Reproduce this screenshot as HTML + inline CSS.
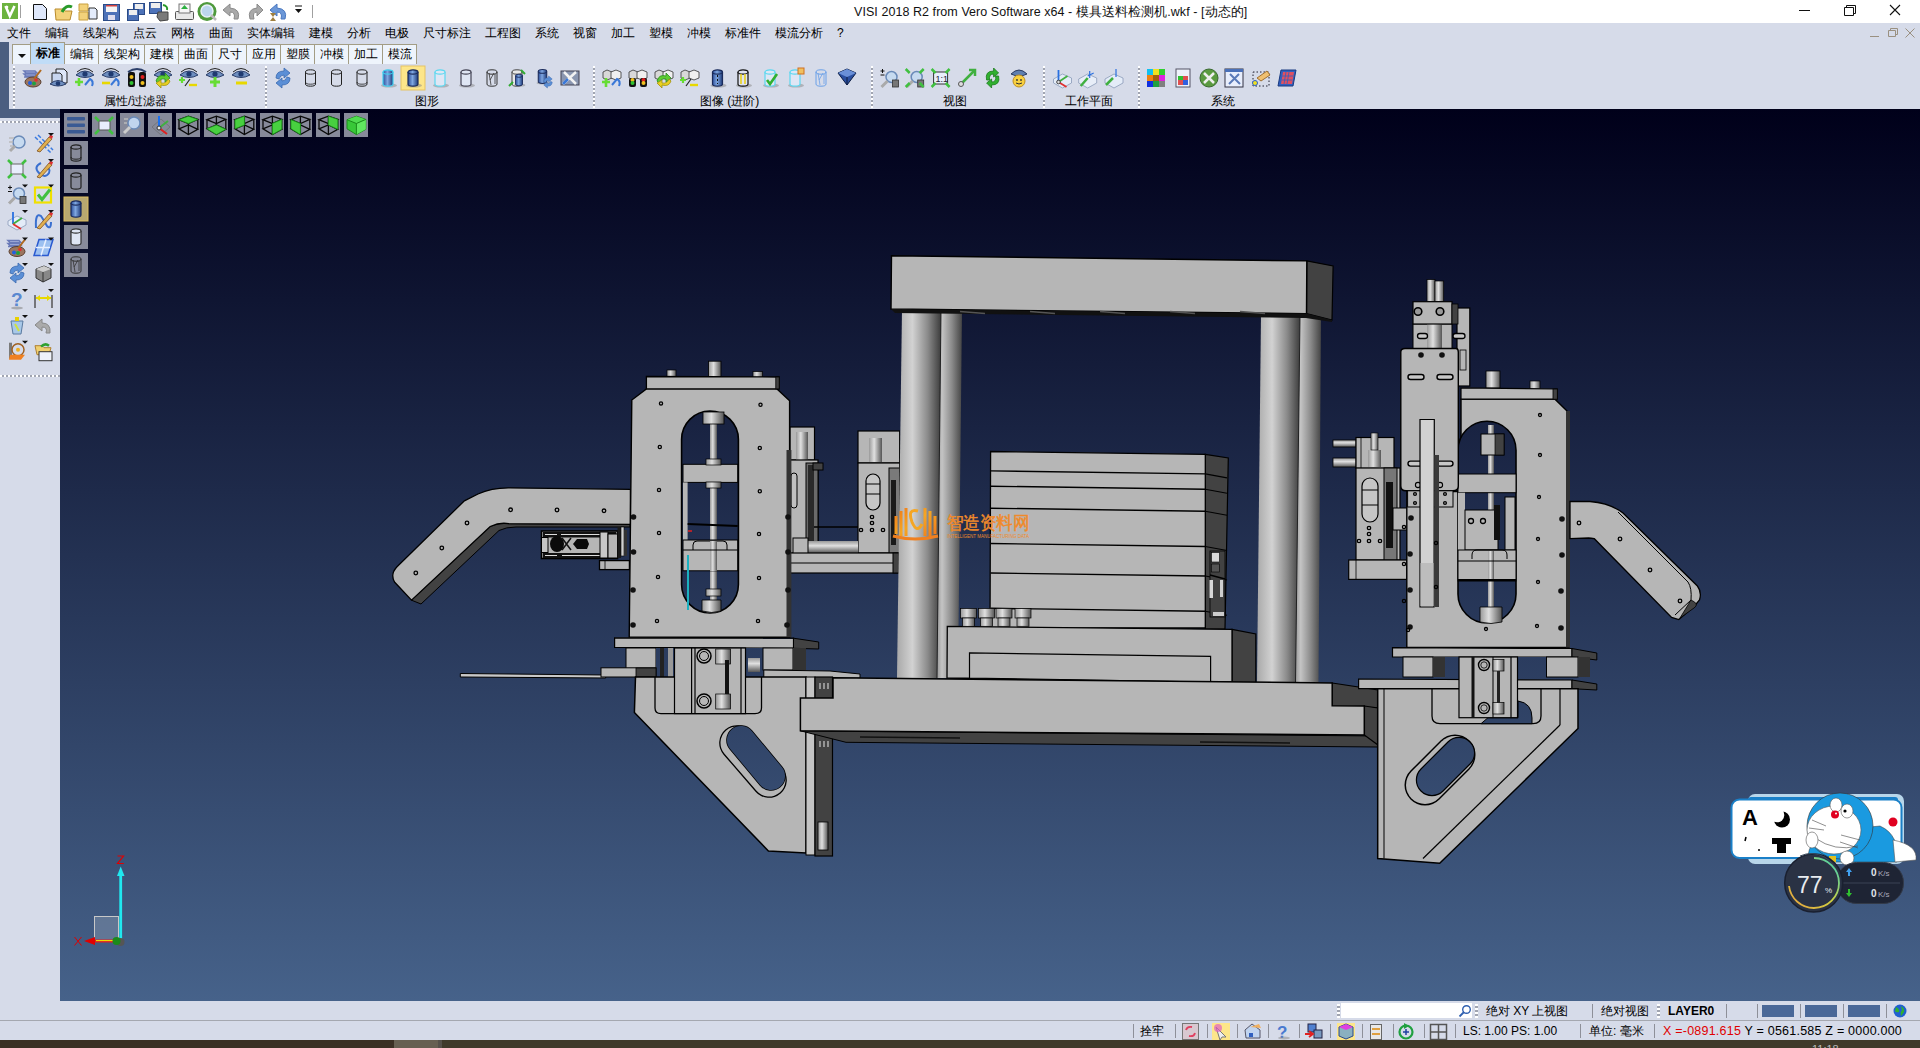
<!DOCTYPE html>
<html><head><meta charset="utf-8">
<style>
*{margin:0;padding:0;box-sizing:border-box}
html,body{width:1920px;height:1048px;overflow:hidden;background:#d6dbe9;font-family:"Liberation Sans",sans-serif;font-size:12px;color:#000}
.a{position:absolute}
.t{position:absolute;white-space:nowrap;line-height:1}
#title{left:0;top:0;width:1920px;height:23px;background:#fff}
#menu{left:0;top:23px;width:1920px;height:19px;background:#d6dbe9}
#tbwrap{left:9px;top:42px;width:1911px;height:67px;background:#d6dbe9}
#lstrip{left:0;top:42px;width:9px;height:76px;background:#4b5e80}
#lstrip2{left:0;top:109px;width:60px;height:9px;background:#4b5e80}
.tab{position:absolute;top:44px;height:20px;border:1px solid #a39d85;border-bottom:none;background:#eef4fc;font-size:12px;text-align:center;line-height:19px}
#view{left:60px;top:109px;width:1860px;height:892px;background:linear-gradient(#00001a,#46628a)}
#lpanel{left:0;top:118px;width:60px;height:883px;background:#d6dbe9}
#sb1{left:0;top:1001px;width:1920px;height:19px;background:#d6dbe9}
#sbline{left:0;top:1020px;width:1920px;height:1px;background:#a5a8b0}
#sb2{left:0;top:1021px;width:1920px;height:19px;background:#d6dbe9}
#task{left:0;top:1040px;width:1920px;height:8px;background:#3b2f24}
.lbl{position:absolute;top:95px;font-size:12px;white-space:nowrap;line-height:1}
.vsep{position:absolute;width:2px;background:repeating-linear-gradient(#fff 0 2px,#a0a4b0 2px 4px)}
.hsep{position:absolute;height:2px;background:repeating-linear-gradient(90deg,#fff 0 2px,#a0a4b0 2px 4px)}
.mi{position:absolute;top:27px;font-size:12px;white-space:nowrap;line-height:1}
.vb{position:absolute;width:24px;height:24px;background:#878a96;border:1px solid #6f7280}
.sbsep{position:absolute;top:1024px;width:1px;height:14px;background:#8e9099}

</style></head><body>
<div id="title" class="a"></div><div id="menu" class="a"></div><div id="tbwrap" class="a"></div>
<div id="lstrip" class="a"></div><div id="lstrip2" class="a"></div><div id="view" class="a"></div><div id="lpanel" class="a"></div>
<div id="sb1" class="a"></div><div id="sbline" class="a"></div><div id="sb2" class="a"></div><div id="task" class="a"></div>
<svg class="a" style="left:0;top:0" width="1920" height="42"><rect x="2" y="3" width="16" height="16" fill="#6cb33f"/><path d="M5.5 6 L9.8 16 L14.5 6" stroke="#fff" stroke-width="2.6" fill="none"/><circle cx="7" cy="7" r="1.3" fill="#fff"/><rect x="20" y="5" width="1" height="13" fill="#a0a0a0"/><path d="M33.5 4.5 H42.5 L46.5 8.5 V19.5 H33.5 Z" fill="#dfe8fb" stroke="#111" stroke-width="1"/><path d="M55 9 H63 L65 11 H72 L70 20 H56 Z" fill="#f3d27a" stroke="#b98a2a" stroke-width="1"/><path d="M62 12 Q66 4 72 7" stroke="#2a9a2a" stroke-width="3" fill="none"/><path d="M79 4 H88 V11 H79 Z M79 12 H88 V20 H79Z" fill="#f3d27a" stroke="#c9a040"/><path d="M89 8 H95 L97 10 V19 H89 Z" fill="#e4ecfb" stroke="#333"/><rect x="103.5" y="4.5" width="16" height="16" fill="#4d72b8" stroke="#2b4b86"/><rect x="106" y="5" width="11" height="7" fill="#f4f4f4"/><rect x="106" y="5" width="11" height="1.5" fill="#d04040"/><rect x="108" y="15" width="7" height="5" fill="#dde"/><rect x="133.5" y="3.5" width="11" height="11" fill="#4d72b8" stroke="#2b4b86"/><rect x="135" y="4" width="8" height="5" fill="#eee"/><rect x="127.5" y="9.5" width="11" height="11" fill="#4d72b8" stroke="#2b4b86"/><rect x="129" y="10" width="8" height="5" fill="#eee"/><rect x="149.5" y="2.5" width="12" height="11" fill="#4d72b8" stroke="#2b4b86"/><rect x="151" y="3" width="9" height="5" fill="#eee"/><path d="M158 12 L168 12 L168 20 L160 21 L157 17Z" fill="#7a7a7a" stroke="#444"/><path d="M163 5 Q168 6 167 10" stroke="#2a9a2a" stroke-width="2" fill="none"/><rect x="175.5" y="11.5" width="18" height="8" rx="1" fill="#e8e8e8" stroke="#555"/><rect x="179" y="4" width="11" height="9" fill="#f6f6f6" stroke="#777"/><path d="M184.5 5 L181 9 H188Z" fill="#2bb040"/><circle cx="207" cy="11.5" r="9.5" fill="#4f9a3d"/><circle cx="207" cy="11" r="6" fill="#bcd6ee" stroke="#e8f0f8" stroke-width="1.5"/><path d="M211 15 L216 20" stroke="#bbb" stroke-width="2.5"/><path d="M238 19 Q241 9 230 8 L230 4 L223 10 L230 16 L230 12 Q236 12 234 19Z" fill="#a9a9a9" stroke="#8a8a8a"/><path d="M250 19 Q247 9 257 8 L257 4 L263 10 L257 16 L257 12 Q252 12 254 19Z" fill="#a9a9a9" stroke="#8a8a8a"/><path d="M285 19 Q288 9 277 8 L277 4 L270 10 L277 16 L277 12 Q283 12 281 19Z" fill="#6c98d8" stroke="#4a78c0"/><path d="M270 13 H276 L273 17 L276 21 H270 L273 17Z" fill="#a08040"/><path d="M295 6 H302" stroke="#111" stroke-width="1"/><path d="M295 9 L302 9 L298.5 13Z" fill="#111"/><rect x="312" y="5" width="1" height="13" fill="#a0a0a0"/><path d="M1799 10.5 H1810" stroke="#111" stroke-width="1"/><path d="M1844.5 7.5 H1853.5 V15.5 H1844.5Z" fill="none" stroke="#111"/><path d="M1846.5 7.5 V5.5 H1855.5 V13.5 H1853.5" fill="none" stroke="#111"/><path d="M1890 5 L1900 15 M1900 5 L1890 15" stroke="#111" stroke-width="1.1"/><path d="M1870 36.5 H1879" stroke="#9a9080" stroke-width="1"/><path d="M1888.5 30.5 H1895.5 V36.5 H1888.5Z M1890.5 30.5 V28.5 H1897.5 V34.5 H1895.5" fill="none" stroke="#9a9080"/><path d="M1905.5 28.5 L1914.5 37.5 M1914.5 28.5 L1905.5 37.5" stroke="#9a9080" stroke-width="1"/></svg>
<div class="t" style="left:854px;top:6px;font-size:12.5px;letter-spacing:0.06px;color:#111" id="ttl">VISI 2018 R2 from Vero Software x64 - 模具送料检测机.wkf - [动态的]</div>
<div class="mi" style="left:7px">文件</div>
<div class="mi" style="left:45px">编辑</div>
<div class="mi" style="left:83px">线架构</div>
<div class="mi" style="left:133px">点云</div>
<div class="mi" style="left:171px">网格</div>
<div class="mi" style="left:209px">曲面</div>
<div class="mi" style="left:247px">实体编辑</div>
<div class="mi" style="left:309px">建模</div>
<div class="mi" style="left:347px">分析</div>
<div class="mi" style="left:385px">电极</div>
<div class="mi" style="left:423px">尺寸标注</div>
<div class="mi" style="left:485px">工程图</div>
<div class="mi" style="left:535px">系统</div>
<div class="mi" style="left:573px">视窗</div>
<div class="mi" style="left:611px">加工</div>
<div class="mi" style="left:649px">塑模</div>
<div class="mi" style="left:687px">冲模</div>
<div class="mi" style="left:725px">标准件</div>
<div class="mi" style="left:775px">模流分析</div>
<div class="mi" style="left:837px">?</div>
<div class="tab" style="left:12px;width:19px"><svg width="14" height="19" style="margin-top:0"><path d="M3 9 L11 9 L7 13Z" fill="#111"/></svg></div>
<div class="tab" style="left:30px;width:35px;top:42px;height:22px;background:#c0dcf7;font-weight:bold;line-height:21px;">标准</div>
<div class="tab" style="left:64px;width:35px;">编辑</div>
<div class="tab" style="left:98px;width:47px;">线架构</div>
<div class="tab" style="left:144px;width:35px;">建模</div>
<div class="tab" style="left:178px;width:35px;">曲面</div>
<div class="tab" style="left:212px;width:35px;">尺寸</div>
<div class="tab" style="left:246px;width:35px;">应用</div>
<div class="tab" style="left:280px;width:35px;">塑膜</div>
<div class="tab" style="left:314px;width:35px;">冲模</div>
<div class="tab" style="left:348px;width:35px;">加工</div>
<div class="tab" style="left:382px;width:35px;">模流</div><svg class="a" style="left:0;top:0" width="1920" height="1048" viewBox="0 0 1920 1048">
<defs>
<linearGradient id="bg" gradientUnits="userSpaceOnUse" x1="0" y1="109" x2="0" y2="1001"><stop offset="0" stop-color="#00001a"/><stop offset="1" stop-color="#46628a"/></linearGradient>
<linearGradient id="pa" x1="0" y1="0" x2="1" y2="0"><stop offset="0" stop-color="#a9a9a9"/><stop offset="0.35" stop-color="#d2d2d2"/><stop offset="0.7" stop-color="#8a8a8a"/><stop offset="1" stop-color="#3c3c3c"/></linearGradient>
<linearGradient id="pb" x1="0" y1="0" x2="1" y2="0"><stop offset="0" stop-color="#9a9a9a"/><stop offset="0.2" stop-color="#c4c4c4"/><stop offset="0.6" stop-color="#8a8a8a"/><stop offset="1" stop-color="#444"/></linearGradient>
<linearGradient id="rod" x1="0" y1="0" x2="1" y2="0"><stop offset="0" stop-color="#999"/><stop offset="0.4" stop-color="#e0e0e0"/><stop offset="1" stop-color="#555"/></linearGradient>
<linearGradient id="rodh" x1="0" y1="0" x2="0" y2="1"><stop offset="0" stop-color="#999"/><stop offset="0.4" stop-color="#e0e0e0"/><stop offset="1" stop-color="#555"/></linearGradient>
<linearGradient id="wl" x1="0" y1="0" x2="1" y2="1"><stop offset="0" stop-color="#f07a1a"/><stop offset="0.5" stop-color="#f5a623"/><stop offset="1" stop-color="#f07a1a"/></linearGradient>
</defs>
<path d="M411.5 600.2 L421 604 L499 530.5 Q506 527 516 527 L630 527 L630 524.4 L508.8 523.7 Q500 522 490.2 526.5 Z" fill="#424242" stroke="#000" stroke-width="1" />
<path d="M630.4 489.3 L510.2 487.9 Q492 487.5 478 494 L464.4 500.8 L397 566.7 Q390 574 394.5 582 L411.5 600.2 L490.2 526.5 Q500 522 508.8 523.7 L630.4 524.4 Z" fill="#b6b6b6" stroke="#000" stroke-width="1.3" />
<circle cx="415.8" cy="573" r="1.8" fill="none" stroke="#000" stroke-width="1.3"/>
<circle cx="441.8" cy="548" r="1.8" fill="none" stroke="#000" stroke-width="1.3"/>
<circle cx="467" cy="523" r="1.8" fill="none" stroke="#000" stroke-width="1.3"/>
<circle cx="510.6" cy="509.8" r="1.8" fill="none" stroke="#000" stroke-width="1.3"/>
<circle cx="557" cy="510" r="1.8" fill="none" stroke="#000" stroke-width="1.3"/>
<circle cx="604" cy="510.8" r="1.8" fill="none" stroke="#000" stroke-width="1.3"/>
<rect x="541.5" y="531" width="76" height="27.5" fill="#b6b6b6" stroke="#000" stroke-width="1.6" />
<rect x="543" y="532" width="73" height="5.5" fill="#111" stroke="none" stroke-width="0" />
<rect x="543" y="553" width="73" height="5" fill="#111" stroke="none" stroke-width="0" />
<line x1="545" y1="534.5" x2="557" y2="534.5" stroke="#ddd" stroke-width="1"/>
<line x1="561" y1="534.5" x2="600" y2="534.5" stroke="#ddd" stroke-width="1"/>
<line x1="545" y1="555.5" x2="557" y2="555.5" stroke="#ddd" stroke-width="1"/>
<line x1="562" y1="555.5" x2="600" y2="555.5" stroke="#ddd" stroke-width="1"/>
<rect x="541.5" y="537.5" width="6.5" height="15" fill="#c4c4c4" stroke="#000" stroke-width="1" />
<ellipse cx="557" cy="544" rx="7" ry="8" fill="#0a0a0a"/>
<path d="M573 544 L577 539 L587 539 L589 544 L587 549 L577 549 Z" fill="#0a0a0a" stroke="none" stroke-width="0" />
<path d="M562 538 L571 550 M571 538 L562 550" fill="none" stroke="#111" stroke-width="1.5" />
<rect x="600" y="532" width="8" height="26" fill="#c8c8c8" stroke="#000" stroke-width="1" />
<rect x="608" y="534" width="9.5" height="24" fill="#b6b6b6" stroke="#000" stroke-width="1" />
<rect x="617.5" y="527" width="3.5" height="31" fill="#1a1a1a" stroke="none" stroke-width="0" />
<rect x="621" y="527" width="3" height="29" fill="#d0d0d0" stroke="#000" stroke-width="0.6" />
<rect x="624" y="530" width="3" height="26" fill="#333" stroke="none" stroke-width="0" />
<rect x="599.5" y="560.6" width="29.9" height="9" fill="#b6b6b6" stroke="#000" stroke-width="1.3" />
<line x1="605" y1="560.6" x2="605" y2="569.6" stroke="#000" stroke-width="0.8"/>
<rect x="858" y="431" width="41.7" height="32" fill="#b6b6b6" stroke="#000" stroke-width="1.2" />
<rect x="869" y="438" width="13" height="24" fill="url(#rod)" stroke="none" stroke-width="0" />
<rect x="790" y="427" width="24.5" height="33" fill="#b6b6b6" stroke="#000" stroke-width="1.2" />
<rect x="796" y="432" width="12" height="28" fill="url(#rod)" stroke="none" stroke-width="0" />
<rect x="790" y="460" width="28" height="93" fill="#b6b6b6" stroke="#000" stroke-width="1.2" />
<rect x="806" y="463" width="12" height="90" fill="#6a6a6a" stroke="#000" stroke-width="1" />
<rect x="808" y="465" width="6" height="83" fill="#2a2a2a" stroke="none" stroke-width="0" />
<path d="M791 476 A3 3 0 0 1 797 476 L797 505 A3 3 0 0 1 791 505 Z" fill="#c0c0c0" stroke="#000" stroke-width="1" />
<rect x="813" y="463" width="10" height="7" fill="#424242" stroke="#000" stroke-width="1" />
<rect x="858" y="463" width="41.7" height="90" fill="#b6b6b6" stroke="#000" stroke-width="1.2" />
<path d="M866 481 A7 7 0 0 1 880 481 L880 503 A7 7 0 0 1 866 503 Z" fill="#c6c6c6" stroke="#000" stroke-width="1.2" />
<line x1="866" y1="484" x2="880" y2="484" stroke="#000" stroke-width="1"/>
<line x1="866" y1="494" x2="880" y2="494" stroke="#000" stroke-width="1"/>
<rect x="889" y="468" width="10.7" height="85" fill="#7a7a7a" stroke="#000" stroke-width="1" />
<rect x="891" y="480" width="5" height="65" fill="#1a1a1a" stroke="none" stroke-width="0" />
<circle cx="872" cy="517" r="1.7" fill="none" stroke="#000" stroke-width="1.3"/>
<circle cx="872" cy="523" r="1.7" fill="none" stroke="#000" stroke-width="1.3"/>
<circle cx="861" cy="530" r="1.7" fill="none" stroke="#000" stroke-width="1.3"/>
<circle cx="872" cy="530" r="1.7" fill="none" stroke="#000" stroke-width="1.3"/>
<circle cx="883" cy="530" r="1.7" fill="none" stroke="#000" stroke-width="1.3"/>
<line x1="814" y1="527" x2="858" y2="527" stroke="#000" stroke-width="1.5"/>
<rect x="808" y="541" width="50" height="12" fill="url(#rodh)" stroke="none" stroke-width="0" />
<rect x="793" y="538" width="15" height="19" fill="#b6b6b6" stroke="#000" stroke-width="1" />
<rect x="790" y="553" width="108.8" height="20" fill="#b6b6b6" stroke="#000" stroke-width="1.2" />
<line x1="790" y1="563" x2="898.8" y2="563" stroke="#000" stroke-width="1"/>
<rect x="893" y="553" width="6" height="20" fill="#424242" stroke="#000" stroke-width="1" />
<polygon points="902,309 941,309 937,678 897,678" fill="url(#pa)" stroke="none" stroke-width="0" />
<polygon points="941,312 962,312 958,678 937,678" fill="url(#pb)" stroke="none" stroke-width="0" />
<line x1="941" y1="309" x2="937" y2="678" stroke="#222" stroke-width="1"/>
<polygon points="1205.3,454.3 1228.3,458 1225,629 1205.3,629" fill="#424242" stroke="#000" stroke-width="1.2" />
<polygon points="990.6,451.5 1205.3,454.3 1205.3,628 990,628" fill="#b6b6b6" stroke="#000" stroke-width="1.3" />
<line x1="990.6" y1="470.9" x2="1205.3" y2="473.9" stroke="#000" stroke-width="1.4"/>
<line x1="1205.3" y1="473.9" x2="1227" y2="477.9" stroke="#000" stroke-width="1.1"/>
<line x1="990.6" y1="486.2" x2="1205.3" y2="489.2" stroke="#000" stroke-width="1.4"/>
<line x1="1205.3" y1="489.2" x2="1227" y2="493.2" stroke="#000" stroke-width="1.1"/>
<line x1="990.6" y1="508.2" x2="1205.3" y2="511.2" stroke="#000" stroke-width="1.4"/>
<line x1="1205.3" y1="511.2" x2="1227" y2="515.2" stroke="#000" stroke-width="1.1"/>
<line x1="990.6" y1="543.5" x2="1205.3" y2="546.5" stroke="#000" stroke-width="1.4"/>
<line x1="1205.3" y1="546.5" x2="1227" y2="550.5" stroke="#000" stroke-width="1.1"/>
<line x1="990.6" y1="573" x2="1205.3" y2="576" stroke="#000" stroke-width="1.4"/>
<line x1="1205.3" y1="576" x2="1227" y2="580" stroke="#000" stroke-width="1.1"/>
<line x1="990.6" y1="608.3" x2="1205.3" y2="611.3" stroke="#000" stroke-width="1.4"/>
<line x1="1205.3" y1="611.3" x2="1227" y2="615.3" stroke="#000" stroke-width="1.1"/>
<rect x="1210" y="551" width="15" height="66" fill="#424242" stroke="#000" stroke-width="0.8" />
<rect x="1211.5" y="552.5" width="8" height="9.5" fill="#d8d8d8" stroke="#000" stroke-width="0.6" />
<rect x="1211.5" y="564" width="8" height="8" fill="#555" stroke="#000" stroke-width="0.6" />
<rect x="1209.5" y="580" width="3.5" height="18" fill="#d8d8d8" stroke="none" stroke-width="0" />
<rect x="1220" y="580" width="3" height="17" fill="#cfcfcf" stroke="none" stroke-width="0" />
<line x1="1210" y1="575" x2="1225" y2="579" stroke="#000" stroke-width="1.5"/>
<rect x="1213" y="612" width="11" height="4" fill="#ccc" stroke="none" stroke-width="0" />
<polygon points="1232,629.4 1255.8,634 1255.8,683 1232,682" fill="#424242" stroke="#000" stroke-width="1.2" />
<polygon points="947.3,626.3 1232,629.4 1232,682 947,678" fill="#b6b6b6" stroke="#000" stroke-width="1.3" />
<polygon points="969.5,652.9 1210.6,656.3 1210.6,682 969.5,678" fill="#b6b6b6" stroke="#000" stroke-width="1.2" />
<rect x="960.5" y="608.5" width="16" height="9.5" fill="url(#rod)" stroke="#000" stroke-width="0.7" />
<rect x="962.5" y="618" width="12" height="8.3" fill="url(#rod)" stroke="#000" stroke-width="0.7" />
<rect x="978.5" y="608.5" width="16" height="9.5" fill="url(#rod)" stroke="#000" stroke-width="0.7" />
<rect x="980.5" y="618" width="12" height="8.3" fill="url(#rod)" stroke="#000" stroke-width="0.7" />
<rect x="996" y="608.5" width="16" height="9.5" fill="url(#rod)" stroke="#000" stroke-width="0.7" />
<rect x="998" y="618" width="12" height="8.3" fill="url(#rod)" stroke="#000" stroke-width="0.7" />
<rect x="1015" y="608.5" width="16" height="9.5" fill="url(#rod)" stroke="#000" stroke-width="0.7" />
<rect x="1017" y="618" width="12" height="8.3" fill="url(#rod)" stroke="#000" stroke-width="0.7" />
<polygon points="1261,314 1300,314 1295.5,683 1257,683" fill="url(#pa)" stroke="none" stroke-width="0" />
<polygon points="1300,318 1321,318 1318.5,683 1295.5,683" fill="url(#pb)" stroke="none" stroke-width="0" />
<line x1="1300" y1="316" x2="1295.5" y2="683" stroke="#222" stroke-width="1"/>
<polygon points="1306.8,260.9 1333.1,266 1332,320 1306.5,313.6" fill="#424242" stroke="#000" stroke-width="1.2" />
<polygon points="891.5,255.7 1306.8,260.9 1306.5,313.6 891,309" fill="#b6b6b6" stroke="#000" stroke-width="1.4" />
<path d="M891 309 L1306.5 313.6 L1332 320 L1332 322 L1306 318 L895 313 Z" fill="#111" stroke="none" stroke-width="0" />
<line x1="960" y1="311.5" x2="985" y2="313.5" stroke="#555" stroke-width="1.5"/>
<line x1="1030" y1="311.5" x2="1055" y2="313.5" stroke="#555" stroke-width="1.5"/>
<line x1="1100" y1="311.5" x2="1125" y2="313.5" stroke="#555" stroke-width="1.5"/>
<line x1="1170" y1="311.5" x2="1195" y2="313.5" stroke="#555" stroke-width="1.5"/>
<line x1="1240" y1="311.5" x2="1265" y2="313.5" stroke="#555" stroke-width="1.5"/>
<g>
<path d="M896 534 L896 516 M901 536 L901 511 M906 536 L906 508 M925 536 L925 508 M930 536 L930 511 M935 534 L935 516" fill="none" stroke="url(#wl)" stroke-width="3" />
<path d="M893 536 Q915 542 938 536" fill="none" stroke="#f08020" stroke-width="3" />
<path d="M912 522 Q907 508 918 511 M912 522 Q917 534 922 524" fill="none" stroke="#f5a623" stroke-width="3" />
</g>
<text x="946.5" y="529" font-size="17.5" fill="#f08a2a" stroke="#f08a2a" stroke-width="0.45" font-family="Liberation Sans,sans-serif" textLength="83" lengthAdjust="spacingAndGlyphs">智造资料网</text>
<text x="947" y="537.5" font-size="4.5" fill="#f08a2a" font-family="Liberation Sans,sans-serif" textLength="82" lengthAdjust="spacingAndGlyphs">INTELLIGENT MANUFACTURING DATA</text>
<rect x="708.6" y="361.2" width="12.4" height="15.8" fill="url(#rod)" stroke="#000" stroke-width="0.8" />
<rect x="667" y="370" width="9" height="7" fill="url(#rod)" stroke="#000" stroke-width="0.7" />
<rect x="753" y="371.6" width="9.6" height="6.2" fill="url(#rod)" stroke="#000" stroke-width="0.7" />
<polygon points="646.4,388.9 777,388.9 789.6,400.7 789.6,637.3 629.2,637.3 631.8,400" fill="#b6b6b6" stroke="#000" stroke-width="1.4" />
<rect x="786.5" y="450" width="4.9" height="187.3" fill="#333" stroke="none" stroke-width="0" />
<polygon points="646.4,376.5 779.2,377 779.2,388.9 646.4,388.9" fill="#b6b6b6" stroke="#000" stroke-width="1.3" />
<rect x="775.8" y="377" width="3.4" height="11.9" fill="#424242" stroke="#000" stroke-width="0.8" />
<path d="M681.6 439.4 A28.4 28.4 0 0 1 738.4 439.4 L738.4 584.6 A28.4 28.4 0 0 1 681.6 584.6 Z" fill="url(#bg)" stroke="#000" stroke-width="1.6" />
<rect x="710" y="418" width="7" height="182" fill="url(#rod)" stroke="none" stroke-width="0" />
<rect x="683" y="464.3" width="54.7" height="18.1" fill="#b6b6b6" stroke="#000" stroke-width="1" />
<rect x="683" y="482.4" width="4.6" height="57.6" fill="#b6b6b6" stroke="none" stroke-width="0" />
<rect x="683" y="540" width="54.7" height="30.8" fill="#b6b6b6" stroke="#000" stroke-width="1" />
<path d="M693 550 L693 545 Q693 541 697 541 L723 541 Q727 541 727 545 L727 550" fill="none" stroke="#000" stroke-width="1" />
<rect x="710" y="541" width="7" height="30" fill="url(#rod)" stroke="none" stroke-width="0" />
<line x1="683" y1="550" x2="737.7" y2="550" stroke="#000" stroke-width="1"/>
<line x1="687.6" y1="524" x2="737.7" y2="526" stroke="#000" stroke-width="2"/>
<rect x="703" y="412" width="21" height="12" fill="url(#rod)" stroke="#000" stroke-width="0.8" />
<rect x="706" y="459" width="15" height="6" fill="url(#rod)" stroke="#000" stroke-width="0.7" />
<rect x="706" y="482" width="15" height="6" fill="url(#rod)" stroke="#000" stroke-width="0.7" />
<rect x="706" y="589" width="15" height="7" fill="url(#rod)" stroke="#000" stroke-width="0.7" />
<path d="M702 600 L721 600 L721 611 Q712 614 702 611 Z" fill="url(#rod)" stroke="#000" stroke-width="0.8" />
<line x1="688" y1="555" x2="688" y2="610" stroke="#1ab0c0" stroke-width="2"/>
<line x1="688" y1="531" x2="692" y2="531" stroke="#e02020" stroke-width="1.5"/>
<circle cx="661" cy="403.4" r="1.6" fill="none" stroke="#000" stroke-width="1.3"/>
<circle cx="760.5" cy="404.8" r="1.6" fill="none" stroke="#000" stroke-width="1.3"/>
<circle cx="659.8" cy="447" r="1.6" fill="none" stroke="#000" stroke-width="1.3"/>
<circle cx="759.8" cy="448" r="1.6" fill="none" stroke="#000" stroke-width="1.3"/>
<circle cx="659" cy="490" r="1.6" fill="none" stroke="#000" stroke-width="1.3"/>
<circle cx="759.8" cy="491.3" r="1.6" fill="none" stroke="#000" stroke-width="1.3"/>
<circle cx="659" cy="533" r="1.6" fill="none" stroke="#000" stroke-width="1.3"/>
<circle cx="759" cy="534" r="1.6" fill="none" stroke="#000" stroke-width="1.3"/>
<circle cx="658" cy="577" r="1.6" fill="none" stroke="#000" stroke-width="1.3"/>
<circle cx="759" cy="578" r="1.6" fill="none" stroke="#000" stroke-width="1.3"/>
<circle cx="657" cy="621" r="1.6" fill="none" stroke="#000" stroke-width="1.3"/>
<circle cx="758" cy="621" r="1.6" fill="none" stroke="#000" stroke-width="1.3"/>
<circle cx="633.5" cy="517" r="2.8" fill="#111"/>
<circle cx="633.5" cy="552" r="2.8" fill="#111"/>
<circle cx="633" cy="590" r="2.8" fill="#111"/>
<circle cx="633" cy="625" r="2.8" fill="#111"/>
<circle cx="788" cy="517" r="2.8" fill="#111"/>
<circle cx="788" cy="552" r="2.8" fill="#111"/>
<circle cx="788" cy="590" r="2.8" fill="#111"/>
<circle cx="787" cy="625" r="2.8" fill="#111"/>
<polygon points="614.6,637.8 793.5,638.2 793.5,648.3 614.6,647.3" fill="#b6b6b6" stroke="#000" stroke-width="1.2" />
<polygon points="793.5,638.2 818.7,642 818.7,649 793.5,648.3" fill="#424242" stroke="#000" stroke-width="1" />
<rect x="626" y="648" width="30" height="22" fill="#b6b6b6" stroke="#000" stroke-width="1" />
<rect x="656" y="648" width="18.5" height="29" fill="url(#bg)" stroke="none" stroke-width="0" />
<rect x="660" y="648" width="4" height="29" fill="#222" stroke="none" stroke-width="0" />
<rect x="668" y="648" width="5" height="29" fill="#999" stroke="none" stroke-width="0" />
<rect x="745.5" y="648" width="17.5" height="29" fill="url(#bg)" stroke="none" stroke-width="0" />
<rect x="748" y="658" width="12" height="14" fill="url(#rodh)" stroke="none" stroke-width="0" />
<rect x="763" y="648" width="30" height="22" fill="#b6b6b6" stroke="#000" stroke-width="1" />
<rect x="793" y="648" width="13" height="29" fill="#333" stroke="none" stroke-width="0" />
<polygon points="460.3,673.5 605.7,675 605.7,678 460.3,677" fill="#c8c8c8" stroke="#000" stroke-width="1" />
<rect x="601" y="667.8" width="55" height="9.2" fill="#b6b6b6" stroke="#000" stroke-width="1" />
<rect x="636" y="668" width="20" height="9" fill="#424242" stroke="#000" stroke-width="0.8" />
<polygon points="763.8,670 830,671 860,674 860,678 763.8,678" fill="#b6b6b6" stroke="#000" stroke-width="1" />
<polygon points="635.5,677 806,677 806,853 768.4,851 634.4,712.5" fill="#b6b6b6" stroke="#000" stroke-width="1.5" />
<rect x="806" y="677" width="9" height="178" fill="#c4c4c4" stroke="#000" stroke-width="1" />
<rect x="815" y="677" width="17.5" height="179" fill="#424242" stroke="#000" stroke-width="1.2" />
<path d="M655 677 L655 708 Q655 713.6 661 713.6 L755 713.6 Q761.5 713.6 761.5 708 L761.5 677" fill="none" stroke="#000" stroke-width="1.3" />
<line x1="737" y1="743" x2="769" y2="780" stroke="#000" stroke-width="35.6" stroke-linecap="round"/>
<line x1="737" y1="743" x2="769" y2="780" stroke="#b6b6b6" stroke-width="33" stroke-linecap="round"/>
<line x1="741" y1="740" x2="771" y2="776" stroke="#000" stroke-width="29.6" stroke-linecap="round"/>
<line x1="741" y1="740" x2="771" y2="776" stroke="url(#bg)" stroke-width="28" stroke-linecap="round"/>
<rect x="674.5" y="648" width="71" height="65.6" fill="#b6b6b6" stroke="#000" stroke-width="1.2" />
<line x1="691.6" y1="648" x2="691.6" y2="713.6" stroke="#000" stroke-width="1.2"/>
<line x1="695" y1="648" x2="695" y2="713.6" stroke="#000" stroke-width="1.2"/>
<line x1="741" y1="648" x2="741" y2="713.6" stroke="#000" stroke-width="1.2"/>
<circle cx="704" cy="656" r="7" fill="none" stroke="#000" stroke-width="1.5"/><circle cx="704" cy="656" r="4.5" fill="none" stroke="#000" stroke-width="1"/>
<rect x="715.7" y="649" width="14.9" height="15" fill="url(#rod)" stroke="#000" stroke-width="0.7" />
<circle cx="704" cy="701" r="7" fill="none" stroke="#000" stroke-width="1.5"/><circle cx="704" cy="701" r="4.5" fill="none" stroke="#000" stroke-width="1"/>
<rect x="715.7" y="694" width="14.9" height="15" fill="url(#rod)" stroke="#000" stroke-width="0.7" />
<rect x="725" y="660" width="4" height="34" fill="#111" stroke="none" stroke-width="0" />
<rect x="818" y="822" width="10" height="28" fill="url(#rod)" stroke="#000" stroke-width="0.8" />
<line x1="820" y1="683" x2="820" y2="689" stroke="#ccc" stroke-width="1.2"/>
<line x1="824" y1="683" x2="824" y2="689" stroke="#ccc" stroke-width="1.2"/>
<line x1="828" y1="683" x2="828" y2="689" stroke="#ccc" stroke-width="1.2"/>
<line x1="820" y1="741" x2="820" y2="747" stroke="#ccc" stroke-width="1.2"/>
<line x1="824" y1="741" x2="824" y2="747" stroke="#ccc" stroke-width="1.2"/>
<line x1="828" y1="741" x2="828" y2="747" stroke="#ccc" stroke-width="1.2"/>
<path d="M800.4 730.8 L1378 736 L1378 747 L846 742.3 Z" fill="#424242" stroke="#000" stroke-width="1" />
<line x1="860" y1="737" x2="960" y2="738" stroke="#111" stroke-width="1.5"/>
<line x1="1200" y1="742" x2="1290" y2="743" stroke="#111" stroke-width="1.5"/>
<polygon points="1332.2,683 1378,690 1378,708 1332.2,705.8" fill="#424242" stroke="#000" stroke-width="1.2" />
<polygon points="1364.3,706 1378,708 1378,745 1364.3,735" fill="#424242" stroke="#000" stroke-width="1.2" />
<polygon points="833,677.7 1332.2,683 1332.2,705.8 1364.3,706 1364.3,735 800.4,730.8 800.4,698 833,698" fill="#b6b6b6" stroke="#000" stroke-width="1.5" />
<rect x="1333" y="440" width="23" height="7" fill="url(#rodh)" stroke="#000" stroke-width="0.8" />
<rect x="1333" y="458" width="23" height="9" fill="url(#rodh)" stroke="#000" stroke-width="0.8" />
<rect x="1356" y="437.5" width="38" height="30.9" fill="#b6b6b6" stroke="#000" stroke-width="1.2" />
<rect x="1368" y="450" width="13" height="17" fill="url(#rod)" stroke="none" stroke-width="0" />
<rect x="1371" y="433" width="7" height="17" fill="url(#rod)" stroke="#000" stroke-width="0.6" />
<line x1="1361" y1="438" x2="1361" y2="468" stroke="#000" stroke-width="0.8"/>
<rect x="1356" y="468" width="44" height="92" fill="#b6b6b6" stroke="#000" stroke-width="1.2" />
<path d="M1362 486 A8 8 0 0 1 1378 486 L1378 514 A8 8 0 0 1 1362 514 Z" fill="#c6c6c6" stroke="#000" stroke-width="1.2" />
<line x1="1362" y1="490" x2="1378" y2="490" stroke="#000" stroke-width="1"/>
<line x1="1362" y1="505" x2="1378" y2="505" stroke="#000" stroke-width="1"/>
<rect x="1384" y="468" width="13" height="92" fill="#777" stroke="#000" stroke-width="1" />
<rect x="1386" y="482" width="7" height="66" fill="#111" stroke="none" stroke-width="0" />
<circle cx="1369" cy="528" r="1.7" fill="none" stroke="#000" stroke-width="1.3"/>
<circle cx="1369" cy="534" r="1.7" fill="none" stroke="#000" stroke-width="1.3"/>
<circle cx="1359" cy="541" r="1.7" fill="none" stroke="#000" stroke-width="1.3"/>
<circle cx="1369" cy="541" r="1.7" fill="none" stroke="#000" stroke-width="1.3"/>
<circle cx="1380" cy="541" r="1.7" fill="none" stroke="#000" stroke-width="1.3"/>
<rect x="1393" y="508" width="15" height="22" fill="#b6b6b6" stroke="#000" stroke-width="1" />
<rect x="1348.7" y="560" width="58.1" height="19.4" fill="#b6b6b6" stroke="#000" stroke-width="1.2" />
<line x1="1356" y1="560" x2="1356" y2="579" stroke="#000" stroke-width="0.8"/>
<rect x="1486" y="371" width="14" height="17" fill="url(#rod)" stroke="#000" stroke-width="0.8" />
<rect x="1530" y="381" width="10" height="8" fill="url(#rod)" stroke="#000" stroke-width="0.7" />
<polygon points="1461,399.2 1555,399.2 1567.3,411.3 1569,647.4 1406.8,647.4 1406.8,491.6 1461,491.6" fill="#b6b6b6" stroke="#000" stroke-width="1.4" />
<rect x="1566" y="411" width="4" height="236.4" fill="#333" stroke="none" stroke-width="0" />
<polygon points="1461,387.8 1557.3,389 1557.3,399.2 1461,399.2" fill="#b6b6b6" stroke="#000" stroke-width="1.2" />
<rect x="1553" y="389" width="4.3" height="10.2" fill="#424242" stroke="#000" stroke-width="0.8" />
<path d="M1458 450.3 A29 29 0 0 1 1516 450.3 L1516 594 A29 29 0 0 1 1458 594 Z" fill="url(#bg)" stroke="#000" stroke-width="1.6" />
<rect x="1488" y="425" width="6" height="183" fill="url(#rod)" stroke="none" stroke-width="0" />
<rect x="1458" y="474" width="58" height="18.7" fill="#b6b6b6" stroke="#000" stroke-width="1" />
<rect x="1458" y="492.7" width="7" height="57.3" fill="#b6b6b6" stroke="none" stroke-width="0" />
<rect x="1465" y="510" width="33" height="40" fill="#b6b6b6" stroke="#000" stroke-width="1" />
<circle cx="1471" cy="521" r="2.5" fill="none" stroke="#000" stroke-width="1.3"/>
<circle cx="1483" cy="521" r="2.5" fill="none" stroke="#000" stroke-width="1.3"/>
<rect x="1505" y="497" width="10" height="53" fill="#b6b6b6" stroke="#000" stroke-width="1" />
<rect x="1494" y="505" width="6" height="35" fill="#111" stroke="none" stroke-width="0" />
<rect x="1458" y="550" width="58" height="31" fill="#b6b6b6" stroke="#000" stroke-width="1" />
<path d="M1472 559 L1472 555 Q1472 550 1477 550 L1502 550 Q1507 550 1507 555 L1507 559" fill="none" stroke="#000" stroke-width="1" />
<rect x="1488" y="551" width="6" height="29" fill="url(#rod)" stroke="none" stroke-width="0" />
<line x1="1458" y1="561" x2="1516" y2="561" stroke="#000" stroke-width="1"/>
<line x1="1458" y1="580" x2="1516" y2="580" stroke="#000" stroke-width="2"/>
<rect x="1481" y="434" width="23" height="21" fill="#b6b6b6" stroke="#000" stroke-width="1" />
<rect x="1495" y="434" width="9" height="21" fill="#424242" stroke="#000" stroke-width="0.7" />
<path d="M1480 607 L1502 607 L1502 622 Q1491 625 1480 622 Z" fill="url(#rod)" stroke="#000" stroke-width="0.8" />
<circle cx="1540" cy="415" r="1.5" fill="none" stroke="#000" stroke-width="1.3"/>
<circle cx="1540" cy="455" r="1.5" fill="none" stroke="#000" stroke-width="1.3"/>
<circle cx="1539" cy="497" r="1.5" fill="none" stroke="#000" stroke-width="1.3"/>
<circle cx="1538" cy="539" r="1.5" fill="none" stroke="#000" stroke-width="1.3"/>
<circle cx="1538" cy="582" r="1.5" fill="none" stroke="#000" stroke-width="1.3"/>
<circle cx="1537" cy="626" r="1.5" fill="none" stroke="#000" stroke-width="1.3"/>
<circle cx="1486" cy="629" r="1.5" fill="none" stroke="#000" stroke-width="1.3"/>
<circle cx="1562" cy="519" r="2.8" fill="#111"/>
<circle cx="1562" cy="555" r="2.8" fill="#111"/>
<circle cx="1561" cy="591" r="2.8" fill="#111"/>
<circle cx="1561" cy="628" r="2.8" fill="#111"/>
<circle cx="1411" cy="518" r="2.8" fill="#111"/>
<circle cx="1410" cy="554" r="2.8" fill="#111"/>
<circle cx="1410" cy="590" r="2.8" fill="#111"/>
<circle cx="1410" cy="627" r="2.8" fill="#111"/>
<rect x="1457" y="308" width="12.8" height="78" fill="#b6b6b6" stroke="#000" stroke-width="1.2" />
<rect x="1427" y="279.6" width="8" height="22.1" fill="url(#rod)" stroke="#000" stroke-width="0.7" />
<rect x="1435" y="281" width="8.7" height="20.7" fill="url(#rod)" stroke="#000" stroke-width="0.7" />
<rect x="1413" y="324" width="39" height="24.5" fill="#b6b6b6" stroke="#000" stroke-width="1" />
<rect x="1427" y="324" width="15" height="24.5" fill="url(#rod)" stroke="none" stroke-width="0" />
<rect x="1417.5" y="333.5" width="10" height="5" rx="2.5" fill="#c8c8c8" stroke="#000" stroke-width="1.3"/><rect x="1453" y="333.5" width="12" height="5" rx="2.5" fill="#c8c8c8" stroke="#000" stroke-width="1.3"/>
<rect x="1413" y="301.7" width="39" height="22.3" fill="#b6b6b6" stroke="#000" stroke-width="1.2" />
<rect x="1452" y="304" width="6" height="20" fill="#424242" stroke="#000" stroke-width="0.8" />
<circle cx="1418" cy="311.5" r="3.8" fill="#999" stroke="#000" stroke-width="1.6"/><circle cx="1440" cy="311.5" r="3.8" fill="#999" stroke="#000" stroke-width="1.6"/>
<path d="M1405 348.5 L1456 348.5 Q1458.3 348.5 1458.3 352 L1458.3 486 Q1458.3 490.8 1453 490.8 L1406 490.8 Q1400.8 490.8 1400.8 486 L1400.8 352 Q1400.8 348.5 1405 348.5Z" fill="#b6b6b6" stroke="#000" stroke-width="1.4" />
<rect x="1460" y="350" width="6" height="20" fill="#b6b6b6" stroke="#000" stroke-width="0.8" />
<circle cx="1421" cy="355" r="2.8" fill="#111"/><circle cx="1442" cy="355" r="2.8" fill="#111"/>
<rect x="1408" y="374.5" width="16" height="5" rx="2.5" fill="#c8c8c8" stroke="#000" stroke-width="1.4"/>
<rect x="1437" y="374.5" width="16" height="5" rx="2.5" fill="#c8c8c8" stroke="#000" stroke-width="1.4"/>
<rect x="1408" y="461.1" width="16" height="5" rx="2.5" fill="#c8c8c8" stroke="#000" stroke-width="1.4"/>
<rect x="1437" y="461.1" width="16" height="5" rx="2.5" fill="#c8c8c8" stroke="#000" stroke-width="1.4"/>
<circle cx="1418" cy="485" r="2.6" fill="none" stroke="#000" stroke-width="1.1"/>
<circle cx="1440" cy="485" r="2.6" fill="none" stroke="#000" stroke-width="1.1"/>
<rect x="1407.6" y="490.8" width="45.4" height="16.2" fill="#b6b6b6" stroke="#000" stroke-width="1" />
<circle cx="1415" cy="494" r="1.4" fill="none" stroke="#000" stroke-width="1.3"/>
<circle cx="1415" cy="503" r="1.4" fill="none" stroke="#000" stroke-width="1.3"/>
<circle cx="1445" cy="494" r="1.4" fill="none" stroke="#000" stroke-width="1.3"/>
<circle cx="1445" cy="503" r="1.4" fill="none" stroke="#000" stroke-width="1.3"/>
<polygon points="1420,419.5 1434.3,419.5 1434,607 1420,607" fill="#d2d2d2" stroke="#000" stroke-width="1.2" />
<rect x="1434.3" y="455" width="4.7" height="152" fill="#3a3a3a" stroke="none" stroke-width="0" />
<rect x="1420.5" y="563" width="13" height="43" fill="#bdbdbd" stroke="none" stroke-width="0" />
<circle cx="1404" cy="527" r="1.6" fill="none" stroke="#000" stroke-width="1.3"/>
<circle cx="1404" cy="564" r="1.6" fill="none" stroke="#000" stroke-width="1.3"/>
<circle cx="1404" cy="601" r="1.6" fill="none" stroke="#000" stroke-width="1.3"/>
<circle cx="1436" cy="543" r="1.6" fill="none" stroke="#000" stroke-width="1.3"/>
<circle cx="1436" cy="587" r="1.6" fill="none" stroke="#000" stroke-width="1.3"/>
<circle cx="1408" cy="630" r="1.6" fill="none" stroke="#000" stroke-width="1.3"/>
<polygon points="1392.5,647.7 1572,648.5 1572,657 1392.5,657" fill="#b6b6b6" stroke="#000" stroke-width="1.2" />
<polygon points="1572,648.5 1596.8,653 1596.8,660 1572,657" fill="#424242" stroke="#000" stroke-width="1" />
<rect x="1403" y="657" width="30" height="20" fill="#b6b6b6" stroke="#000" stroke-width="1" />
<rect x="1433" y="657" width="12" height="20" fill="#333" stroke="none" stroke-width="0" />
<rect x="1445" y="657" width="14" height="20" fill="url(#bg)" stroke="none" stroke-width="0" />
<rect x="1517.5" y="657" width="29" height="20" fill="url(#bg)" stroke="none" stroke-width="0" />
<rect x="1546.5" y="657" width="31.5" height="20" fill="#b6b6b6" stroke="#000" stroke-width="1" />
<rect x="1578" y="657" width="12" height="20" fill="#333" stroke="none" stroke-width="0" />
<polygon points="1358.6,679 1572,680 1572,688.7 1358.6,688.7" fill="#b6b6b6" stroke="#000" stroke-width="1.2" />
<polygon points="1572,680 1596.8,684 1596.8,690 1572,688.7" fill="#424242" stroke="#000" stroke-width="1" />
<polygon points="1377.7,688.7 1578,688.7 1578,728.5 1439.7,863.3 1377.7,858.5" fill="#b6b6b6" stroke="#000" stroke-width="1.5" />
<line x1="1384" y1="688.7" x2="1384" y2="858.5" stroke="#000" stroke-width="1"/>
<line x1="1423" y1="858.5" x2="1560" y2="725" stroke="#000" stroke-width="1.2"/>
<line x1="1560" y1="725" x2="1560" y2="688.7" stroke="#000" stroke-width="1.2"/>
<path d="M1432 688.7 L1432 716 Q1432 723.7 1440 723.7 L1533 723.7 Q1541 723.7 1541 716 L1541 688.7" fill="none" stroke="#000" stroke-width="1.3" />
<path d="M1481 723.7 L1488 717.7 L1518 717.7 L1518 701 Q1532 703 1532 718 L1532 723.7 Z" fill="url(#bg)" stroke="#000" stroke-width="1" />
<rect x="1459" y="657" width="58.5" height="60.7" fill="#b6b6b6" stroke="#000" stroke-width="1.2" />
<rect x="1471.5" y="657" width="3" height="60.7" fill="#111" stroke="none" stroke-width="0" />
<line x1="1493" y1="657" x2="1493" y2="717.7" stroke="#000" stroke-width="1"/>
<line x1="1511" y1="657" x2="1511" y2="717.7" stroke="#000" stroke-width="1.2"/>
<circle cx="1484" cy="665" r="5.5" fill="none" stroke="#000" stroke-width="1.4"/><circle cx="1484" cy="665" r="3.2" fill="none" stroke="#000" stroke-width="0.8"/>
<rect x="1493" y="659.5" width="11" height="11.5" fill="url(#rod)" stroke="#000" stroke-width="0.7" />
<circle cx="1484" cy="708" r="5.5" fill="none" stroke="#000" stroke-width="1.4"/><circle cx="1484" cy="708" r="3.2" fill="none" stroke="#000" stroke-width="0.8"/>
<rect x="1493" y="702.5" width="11" height="11.5" fill="url(#rod)" stroke="#000" stroke-width="0.7" />
<rect x="1497" y="671" width="3" height="32" fill="#222" stroke="none" stroke-width="0" />
<line x1="1455" y1="755" x2="1425" y2="785" stroke="#000" stroke-width="41" stroke-linecap="round"/>
<line x1="1455" y1="755" x2="1425" y2="785" stroke="#b6b6b6" stroke-width="38" stroke-linecap="round"/>
<line x1="1459" y1="753" x2="1432" y2="780" stroke="#000" stroke-width="32.4" stroke-linecap="round"/>
<line x1="1459" y1="753" x2="1432" y2="780" stroke="url(#bg)" stroke-width="30" stroke-linecap="round"/>
<path d="M1570 501.5 L1590 501.5 Q1610 503 1623 513 L1697.4 586 Q1702 592 1699.5 600 L1694.5 606 L1678.8 619.5 L1671.6 617.4 L1594.3 538.7 Q1591 538 1588.6 538 L1570 538.7 Z" fill="#b6b6b6" stroke="#000" stroke-width="1.3" />
<path d="M1618 512 L1688 582 Q1692 588 1691 600 L1675 615" fill="none" stroke="#000" stroke-width="1" />
<path d="M1691 600 Q1700 604 1694 608 L1680 618 Z" fill="#424242" stroke="#000" stroke-width="0.8" />
<circle cx="1579" cy="523" r="1.8" fill="none" stroke="#000" stroke-width="1.3"/>
<circle cx="1620" cy="539" r="1.8" fill="none" stroke="#000" stroke-width="1.3"/>
<circle cx="1650" cy="570" r="1.8" fill="none" stroke="#000" stroke-width="1.3"/>
<circle cx="1680" cy="601" r="1.8" fill="none" stroke="#000" stroke-width="1.3"/>
</svg><svg class="a" style="left:0;top:0" width="1920" height="110"><defs><linearGradient id="gcyl" x1="0" y1="0" x2="1" y2="0"><stop offset="0" stop-color="#2c4e9a"/><stop offset="0.45" stop-color="#7ea6e0"/><stop offset="1" stop-color="#1e3a7a"/></linearGradient></defs><g transform="translate(23 68)"><path d="M1 3 H12 L14 5 H3Z M1 6 H12 L14 8 H3Z M1 9 H12" stroke="#6a7ab8" stroke-width="1.5" fill="#c8d0f0"/><ellipse cx="10" cy="14" rx="8" ry="5" fill="#9b7560" stroke="#5a4030"/><circle cx="7" cy="15" r="2" fill="#2060e0"/><circle cx="11" cy="15.5" r="2" fill="#20a040"/><circle cx="13" cy="12" r="1.8" fill="#e03030"/><path d="M11 11 L18 2" stroke="#b06a20" stroke-width="2"/></g><g transform="translate(49 68)"><path d="M7 1 H15 L18 4 V15 H7Z" fill="#dde6f8" stroke="#222"/><path d="M3 5 H11 L13 7 V16 H3Z" fill="#c8d6f0" stroke="#222"/><path d="M1 16 Q9 9 17 16 Q9 20 1 16Z" fill="#6f8fc0" stroke="#2c3f6a"/><circle cx="9" cy="15.5" r="2.3" fill="#1f3a70"/></g><g transform="translate(75 68)"><path d="M1 7 Q10 -1 19 7 Q10 12 1 7Z" fill="#6f8fc0" stroke="#2c3f6a" stroke-width="1"/><circle cx="10" cy="6" r="2.6" fill="#1f3a70"/><path d="M2 4 Q10 -3 18 4" stroke="#222" stroke-width="1" fill="none"/><path d="M4 10 V18 M0 14 H8" stroke="#66dd33" stroke-width="2.6"/><path d="M10 17 L15 11 Q19 13 17 18" stroke="#3a78d8" stroke-width="2" fill="none"/></g><g transform="translate(101 68)"><path d="M1 7 Q10 -1 19 7 Q10 12 1 7Z" fill="#6f8fc0" stroke="#2c3f6a" stroke-width="1"/><circle cx="10" cy="6" r="2.6" fill="#1f3a70"/><path d="M2 4 Q10 -3 18 4" stroke="#222" stroke-width="1" fill="none"/><path d="M1 15 H9" stroke="#e8d800" stroke-width="2.6"/><path d="M10 17 L15 11 Q19 13 17 18" stroke="#3a78d8" stroke-width="2" fill="none"/></g><g transform="translate(127 68)"><rect x="1" y="4" width="7" height="15" rx="2" fill="#111"/><rect x="12" y="4" width="7" height="15" rx="2" fill="#111"/><circle cx="4.5" cy="9" r="2" fill="#f0c020"/><circle cx="4.5" cy="15" r="2" fill="#30c030"/><circle cx="15.5" cy="9" r="2" fill="#e02020"/><circle cx="15.5" cy="15" r="2" fill="#f0c020"/><path d="M1 4 Q10 -2 19 4" stroke="#2c3f6a" stroke-width="2" fill="none"/></g><g transform="translate(153 68)"><path d="M1 7 Q10 -1 19 7 Q10 12 1 7Z" fill="#6f8fc0" stroke="#2c3f6a" stroke-width="1"/><circle cx="10" cy="6" r="2.6" fill="#1f3a70"/><path d="M2 4 Q10 -3 18 4" stroke="#222" stroke-width="1" fill="none"/><path d="M3 13 Q5 6 12 8 L12 5 L17 10 L12 14 L12 11 Q7 10 5 15Z" fill="#5ccc30" stroke="#2a8a20" stroke-width="0.8"/><path d="M17 13 Q15 19 8 17 L8 20 L3 15 L8 12 L8 15 Q13 16 15 11Z" fill="#e8d020" stroke="#a09010" stroke-width="0.8"/></g><g transform="translate(179 68)"><path d="M1 7 Q10 -1 19 7 Q10 12 1 7Z" fill="#6f8fc0" stroke="#2c3f6a" stroke-width="1"/><circle cx="10" cy="6" r="2.6" fill="#1f3a70"/><path d="M2 4 Q10 -3 18 4" stroke="#222" stroke-width="1" fill="none"/><path d="M3 9 V15 M0 12 H6" stroke="#66dd33" stroke-width="2.2"/><path d="M6 18 L11 11" stroke="#222" stroke-width="1.2"/><path d="M10 17 H18" stroke="#e8d800" stroke-width="2.4"/></g><g transform="translate(205 68)"><path d="M1 7 Q10 -1 19 7 Q10 12 1 7Z" fill="#6f8fc0" stroke="#2c3f6a" stroke-width="1"/><circle cx="10" cy="6" r="2.6" fill="#1f3a70"/><path d="M2 4 Q10 -3 18 4" stroke="#222" stroke-width="1" fill="none"/><path d="M10 9 V19 M5 14 H15" stroke="#66dd33" stroke-width="3"/></g><g transform="translate(231 68)"><path d="M1 7 Q10 -1 19 7 Q10 12 1 7Z" fill="#6f8fc0" stroke="#2c3f6a" stroke-width="1"/><circle cx="10" cy="6" r="2.6" fill="#1f3a70"/><path d="M2 4 Q10 -3 18 4" stroke="#222" stroke-width="1" fill="none"/><path d="M5 15 H16" stroke="#e8d800" stroke-width="3"/></g><rect x="401" y="66" width="24" height="24" fill="#fde68a" stroke="#e5c365"/><g transform="translate(273 68)"><path d="M3 10 Q3 3 11 3 L11 0 L17 5 L11 10 L11 7 Q7 7 6 11Z" fill="#5b8fd6" stroke="#3a6ab0" stroke-width="0.8"/><path d="M17 10 Q17 17 9 17 L9 20 L3 15 L9 10 L9 13 Q13 13 14 9Z" fill="#5b8fd6" stroke="#3a6ab0" stroke-width="0.8"/></g><g transform="translate(300.5 68)"><path d="M5 4 V16 A5 2.2 0 0 0 15 16 V4" fill="#d6dbe9" stroke="#222" stroke-width="1"/><ellipse cx="10" cy="4" rx="5" ry="2.2" fill="#d6dbe9" stroke="#222" stroke-width="1"/><path d="M5 14 A5 2.2 0 0 0 15 14" fill="none" stroke="#222" stroke-width="0.8"/></g><g transform="translate(326.5 68)"><path d="M5 4 V16 A5 2.2 0 0 0 15 16 V4" fill="#d6dbe9" stroke="#222" stroke-width="1"/><ellipse cx="10" cy="4" rx="5" ry="2.2" fill="#d6dbe9" stroke="#222" stroke-width="1"/></g><g transform="translate(352 68)"><path d="M5 4 V16 A5 2.2 0 0 0 15 16 V4" fill="#d6dbe9" stroke="#222" stroke-width="1"/><ellipse cx="10" cy="4" rx="5" ry="2.2" fill="#d6dbe9" stroke="#222" stroke-width="1"/><path d="M5 14 A5 2.2 0 0 0 15 14" fill="none" stroke="#222" stroke-width="0.8"/></g><g transform="translate(378 68)"><ellipse cx="11" cy="17.5" rx="8" ry="2" fill="#888" opacity="0.5"/><path d="M5 4 V16 A5 2.2 0 0 0 15 16 V4" fill="url(#gcyl)" stroke="#40d0f0" stroke-width="1.2"/><ellipse cx="10" cy="4" rx="5" ry="2.2" fill="url(#gcyl)" stroke="#40d0f0" stroke-width="1.2"/></g><g transform="translate(403 68)"><ellipse cx="11" cy="17.5" rx="8" ry="2" fill="#888" opacity="0.5"/><path d="M5 4 V16 A5 2.2 0 0 0 15 16 V4" fill="url(#gcyl)" stroke="#1a2a5a" stroke-width="1.2"/><ellipse cx="10" cy="4" rx="5" ry="2.2" fill="url(#gcyl)" stroke="#1a2a5a" stroke-width="1.2"/></g><g transform="translate(430 68)"><ellipse cx="11" cy="17.5" rx="8" ry="2" fill="#888" opacity="0.5"/><path d="M5 4 V16 A5 2.2 0 0 0 15 16 V4" fill="#dfe6f4" stroke="#5ad8f0" stroke-width="1.2"/><ellipse cx="10" cy="4" rx="5" ry="2.2" fill="#dfe6f4" stroke="#5ad8f0" stroke-width="1.2"/></g><g transform="translate(456 68)"><ellipse cx="11" cy="17.5" rx="8" ry="2" fill="#888" opacity="0.5"/><path d="M5 4 V16 A5 2.2 0 0 0 15 16 V4" fill="#dfe6f4" stroke="#445" stroke-width="1.2"/><ellipse cx="10" cy="4" rx="5" ry="2.2" fill="#dfe6f4" stroke="#445" stroke-width="1.2"/></g><g transform="translate(482 68)"><path d="M5 4 V16 A5 2.2 0 0 0 15 16 V4" fill="none" stroke="#333" stroke-width="1"/><ellipse cx="10" cy="4" rx="5" ry="2.2" fill="none" stroke="#333" stroke-width="1"/><path d="M7 5 L9 17 M12 5 L8 12 M13 6 L13 16" stroke="#333" stroke-width="0.8"/></g><g transform="translate(507 68)"><path d="M5 4 V16 A5 2.2 0 0 0 15 16 V4" fill="#e8e8e8" stroke="#444" stroke-width="1"/><ellipse cx="10" cy="4" rx="5" ry="2.2" fill="#e8e8e8" stroke="#444" stroke-width="1"/><g transform="translate(5 5) scale(0.7)"><ellipse cx="11" cy="17.5" rx="8" ry="2" fill="#888" opacity="0.5"/><path d="M5 4 V16 A5 2.2 0 0 0 15 16 V4" fill="url(#gcyl)" stroke="#1a2a5a" stroke-width="1.2"/><ellipse cx="10" cy="4" rx="5" ry="2.2" fill="url(#gcyl)" stroke="#1a2a5a" stroke-width="1.2"/></g><path d="M14 2 L18 6 M2 18 L6 14" stroke="#3a3" stroke-width="2"/></g><g transform="translate(534 68)"><g transform="scale(0.85)"><ellipse cx="11" cy="17.5" rx="8" ry="2" fill="#888" opacity="0.5"/><path d="M5 4 V16 A5 2.2 0 0 0 15 16 V4" fill="url(#gcyl)" stroke="#1a2a5a" stroke-width="1.2"/><ellipse cx="10" cy="4" rx="5" ry="2.2" fill="url(#gcyl)" stroke="#1a2a5a" stroke-width="1.2"/></g><g transform="translate(8 8) scale(0.6)"><path d="M3 10 Q3 3 11 3 L11 0 L17 5 L11 10 L11 7 Q7 7 6 11Z" fill="#5b8fd6" stroke="#3a6ab0" stroke-width="0.8"/><path d="M17 10 Q17 17 9 17 L9 20 L3 15 L9 10 L9 13 Q13 13 14 9Z" fill="#5b8fd6" stroke="#3a6ab0" stroke-width="0.8"/></g></g><g transform="translate(560 68)"><rect x="1" y="3" width="18" height="14" fill="#8a96b0" stroke="#445"/><path d="M3 16 L16 4 M4 4 L16 16" stroke="#f2f2f2" stroke-width="2.5"/><path d="M3 16 L8 11" stroke="#3a78d8" stroke-width="2.5"/></g><g transform="translate(602 68)"><path d="M1 4 L5 2 L10 4 L10 10 L5 12 L1 10Z" fill="#d8d8d8" stroke="#333" stroke-width="0.8"/><path d="M9 4 L14 2 L19 4 L19 10 L14 12 L9 10Z" fill="#f0f0f0" stroke="#333" stroke-width="0.8"/><path d="M4 10 V19 M0 14 H8" stroke="#66dd33" stroke-width="2.6"/><path d="M10 17 L15 11 Q19 13 17 18" stroke="#3a78d8" stroke-width="2" fill="none"/></g><g transform="translate(628 68)"><path d="M1 4 L5 2 L10 4 L10 10 L5 12 L1 10Z" fill="#d8d8d8" stroke="#333" stroke-width="0.8"/><path d="M9 4 L14 2 L19 4 L19 10 L14 12 L9 10Z" fill="#f0f0f0" stroke="#333" stroke-width="0.8"/><rect x="1" y="10" width="7" height="9" rx="2" fill="#111"/><rect x="12" y="10" width="7" height="9" rx="2" fill="#111"/><circle cx="4.5" cy="12" r="2" fill="#f0c020"/><circle cx="4.5" cy="15" r="2" fill="#30c030"/><circle cx="15.5" cy="12" r="2" fill="#e02020"/><circle cx="15.5" cy="15" r="2" fill="#f0c020"/></g><g transform="translate(654 68)"><path d="M1 4 L5 2 L10 4 L10 10 L5 12 L1 10Z" fill="#d8d8d8" stroke="#333" stroke-width="0.8"/><path d="M9 4 L14 2 L19 4 L19 10 L14 12 L9 10Z" fill="#f0f0f0" stroke="#333" stroke-width="0.8"/><path d="M3 13 Q5 6 12 8 L12 5 L17 10 L12 14 L12 11 Q7 10 5 15Z" fill="#5ccc30" stroke="#2a8a20" stroke-width="0.8"/><path d="M17 13 Q15 19 8 17 L8 20 L3 15 L8 12 L8 15 Q13 16 15 11Z" fill="#e8d020" stroke="#a09010" stroke-width="0.8"/></g><g transform="translate(680 68)"><path d="M1 4 L5 2 L10 4 L10 10 L5 12 L1 10Z" fill="#d8d8d8" stroke="#333" stroke-width="0.8"/><path d="M9 4 L14 2 L19 4 L19 10 L14 12 L9 10Z" fill="#f0f0f0" stroke="#333" stroke-width="0.8"/><path d="M3 9 V15 M0 12 H6" stroke="#66dd33" stroke-width="2.2"/><path d="M6 18 L11 11" stroke="#222" stroke-width="1.2"/><path d="M10 17 H18" stroke="#e8d800" stroke-width="2.4"/></g><g transform="translate(707.5 68)"><ellipse cx="11" cy="17.5" rx="8" ry="2" fill="#888" opacity="0.5"/><path d="M5 4 V16 A5 2.2 0 0 0 15 16 V4" fill="url(#gcyl)" stroke="#1a2a5a" stroke-width="1.2"/><ellipse cx="10" cy="4" rx="5" ry="2.2" fill="url(#gcyl)" stroke="#1a2a5a" stroke-width="1.2"/><path d="M10 7 V16" stroke="#111" stroke-dasharray="2 2"/></g><g transform="translate(733 68)"><ellipse cx="11" cy="17.5" rx="8" ry="2" fill="#888" opacity="0.5"/><path d="M5 4 V16 A5 2.2 0 0 0 15 16 V4" fill="#e0e4f0" stroke="#111" stroke-width="1.2"/><ellipse cx="10" cy="4" rx="5" ry="2.2" fill="#e0e4f0" stroke="#111" stroke-width="1.2"/><path d="M8 6 V16 M12 6 V16" stroke="#e8d020" stroke-width="1.6"/></g><g transform="translate(760 68)"><ellipse cx="11" cy="17.5" rx="8" ry="2" fill="#888" opacity="0.5"/><path d="M5 4 V16 A5 2.2 0 0 0 15 16 V4" fill="#dfe6f4" stroke="#5ad8f0" stroke-width="1.2"/><ellipse cx="10" cy="4" rx="5" ry="2.2" fill="#dfe6f4" stroke="#5ad8f0" stroke-width="1.2"/><path d="M7 12 L10 16 L17 6" stroke="#30b030" stroke-width="2.6" fill="none"/></g><g transform="translate(785 68)"><ellipse cx="11" cy="17.5" rx="8" ry="2" fill="#888" opacity="0.5"/><path d="M5 4 V16 A5 2.2 0 0 0 15 16 V4" fill="#dfe6f4" stroke="#5ad8f0" stroke-width="1.2"/><ellipse cx="10" cy="4" rx="5" ry="2.2" fill="#dfe6f4" stroke="#5ad8f0" stroke-width="1.2"/><rect x="13" y="0" width="6" height="6" fill="#f0c060" stroke="#d07020"/></g><g transform="translate(811 68)"><path d="M5 4 V16 A5 2.2 0 0 0 15 16 V4" fill="none" stroke="#6aa0e8" stroke-width="1"/><ellipse cx="10" cy="4" rx="5" ry="2.2" fill="none" stroke="#6aa0e8" stroke-width="1"/><path d="M7 5 L9 17 M12 5 L8 12 M13 6 L13 16" stroke="#6aa0e8" stroke-width="0.8"/></g><g transform="translate(837 68)"><path d="M1 5 L10 1 L19 5 L10 17Z" fill="#2a4fa0" stroke="#0a1a40"/><path d="M1 5 L10 9 L19 5 L10 1Z" fill="#6a90d8"/><path d="M10 9 L10 17" stroke="#0a1a40"/></g><g transform="translate(879.5 68)"><circle cx="12" cy="9" r="5.5" fill="#c6daf0" stroke="#6a8ab8" stroke-width="1.5"/><path d="M8 13 L2 19" stroke="#aaa" stroke-width="3"/><rect x="13" y="12" width="6" height="7" fill="#777" stroke="#333" stroke-width="0.8"/><path d="M1 3 H5 M3 1 V5 M1 7 H5" stroke="#111" stroke-width="1"/></g><g transform="translate(904.7 68)"><circle cx="12" cy="9" r="5.5" fill="#c6daf0" stroke="#6a8ab8" stroke-width="1.5"/><path d="M8 13 L2 19" stroke="#aaa" stroke-width="3"/><rect x="13" y="12" width="6" height="7" fill="#777" stroke="#333" stroke-width="0.8"/><path d="M1 1 L5 5 M19 1 L15 5 M1 19 L5 15 M19 19 L15 15" stroke="#40c040" stroke-width="2.5"/></g><g transform="translate(930.6 68)"><rect x="3" y="4" width="14" height="12" fill="#e8eefc" stroke="#333"/><text x="5" y="14" font-size="9" font-family="Liberation Sans" fill="#223">1:1</text><path d="M1 1 L5 5 M19 1 L15 5 M1 19 L5 15 M19 19 L15 15" stroke="#40c040" stroke-width="2.5"/></g><g transform="translate(957 68)"><path d="M5 15 L17 3" stroke="#40b040" stroke-width="2.5"/><path d="M12 2 H18 V8" stroke="#40b040" stroke-width="2.5" fill="none"/><circle cx="4" cy="16" r="2.5" fill="#ddd" stroke="#555"/></g><g transform="translate(982.6 68)"><path d="M4 12 Q2 3 11 3 L11 0 L16 5 L11 9 L11 6 Q6 6 7 12Z M16 8 Q18 17 9 17 L9 20 L4 15 L9 11 L9 14 Q14 14 13 8Z" fill="#30b030" stroke="#1a7a1a" stroke-width="0.8"/></g><g transform="translate(1009 68)"><path d="M2 6 Q10 -2 18 6 Q10 10 2 6Z" fill="#5f7fb0" stroke="#2a3a60"/><circle cx="10" cy="13" r="6" fill="#f8d040" stroke="#c09020"/><circle cx="8" cy="12" r="0.9" fill="#333"/><circle cx="12" cy="12" r="0.9" fill="#333"/><path d="M7 15 Q10 17 13 15" stroke="#333" fill="none"/></g><g transform="translate(1052.5 68)"><path d="M1 11 L10 6 L19 10 L19 15 L10 20 L1 15Z" fill="#e4ecf8" stroke="#8a9ab8" stroke-width="0.8"/><path d="M6 14 V2" stroke="#2a70e0" stroke-width="1.8"/><path d="M6 14 L15 8" stroke="#40b040" stroke-width="1.8"/><path d="M6 14 L14 19" stroke="#e03030" stroke-width="1.8"/><circle cx="6" cy="14" r="1.8" fill="#ddd" stroke="#444"/></g><g transform="translate(1077.7 68)"><path d="M1 11 L10 6 L19 10 L19 15 L10 20 L1 15Z" fill="#e8eef8" stroke="#8a9ab8" stroke-width="0.8"/><path d="M3 18 L10 10" stroke="#40b040" stroke-width="2.5"/><path d="M12 3 V10 M10 8 L16 5" stroke="#2a70e0" stroke-width="1.2"/></g><g transform="translate(1104 68)"><path d="M1 11 L10 6 L19 10 L19 15 L10 20 L1 15Z" fill="#e4ecf8" stroke="#8a9ab8" stroke-width="0.8"/><path d="M2 17 L9 10" stroke="#40b040" stroke-width="2.5"/><path d="M12 1 V9" stroke="#2a70e0" stroke-width="1.2"/></g><g transform="translate(1146 68)"><rect x="1" y="1" width="6" height="6" fill="#10c0f0"/><rect x="7" y="1" width="6" height="6" fill="#f0e020"/><rect x="13" y="1" width="6" height="6" fill="#30d030"/><rect x="1" y="7" width="6" height="6" fill="#f08010"/><rect x="7" y="7" width="6" height="6" fill="#a06010"/><rect x="13" y="7" width="6" height="6" fill="#e020e0"/><rect x="1" y="13" width="6" height="6" fill="#1030e0"/><rect x="7" y="13" width="6" height="6" fill="#20a040"/><rect x="13" y="13" width="6" height="6" fill="#808080"/></g><g transform="translate(1173 68)"><rect x="3" y="1" width="14" height="18" fill="#eef2fa" stroke="#556"/><rect x="5" y="8" width="10" height="9" fill="#e05050"/><rect x="5" y="8" width="5" height="4" fill="#30c030"/><rect x="10" y="12" width="5" height="5" fill="#3060e0"/></g><g transform="translate(1199 68)"><circle cx="10" cy="10" r="9" fill="#5a9a40" stroke="#3a6a30"/><path d="M5 15 L15 5 M5 5 L15 15" stroke="#eee" stroke-width="2.5"/></g><g transform="translate(1224 68)"><rect x="1" y="1" width="18" height="18" fill="#e8eefc" stroke="#334"/><rect x="1" y="1" width="18" height="3" fill="#4a70b8"/><path d="M5 16 L15 6 M6 6 L16 16" stroke="#5a7ab8" stroke-width="2"/></g><g transform="translate(1251 68)"><rect x="2" y="4" width="16" height="14" fill="none" stroke="#223" stroke-dasharray="1.5 2"/><path d="M6 10 L16 3 L19 7 L10 13Z" fill="#f0c070" stroke="#a07030"/><circle cx="4" cy="15" r="2.5" fill="#f0e020" stroke="#2a60d0"/></g><g transform="translate(1277 68)"><path d="M4 2 L19 2 L16 18 L1 18Z" fill="#3060c0" stroke="#1a3a80"/><path d="M6 4 H17 L15 16 H4Z" fill="#e05060"/><path d="M9 4 L7 16 M12 4 L10 16 M5 8 H16 M5 12 H15" stroke="#3060c0" stroke-width="0.8"/></g></svg>
<div class="vsep" style="left:13px;top:66px;height:42px"></div>
<div class="vsep" style="left:265px;top:66px;height:42px"></div>
<div class="vsep" style="left:593px;top:66px;height:42px"></div>
<div class="vsep" style="left:871px;top:66px;height:42px"></div>
<div class="vsep" style="left:1043px;top:66px;height:42px"></div>
<div class="vsep" style="left:1138px;top:66px;height:42px"></div>
<div class="lbl" style="left:104px">属性/过滤器</div>
<div class="lbl" style="left:415px">图形</div>
<div class="lbl" style="left:700px">图像 (进阶)</div>
<div class="lbl" style="left:943px">视图</div>
<div class="lbl" style="left:1065px">工作平面</div>
<div class="lbl" style="left:1211px">系统</div>
<svg class="a" style="left:0;top:118px" width="60" height="300" viewBox="0 118 60 300"><g transform="translate(7 133)"><circle cx="12" cy="9" r="6" fill="#c6daf0" stroke="#6a8ab8" stroke-width="1.5"/><path d="M8 13 L3 18" stroke="#aaa" stroke-width="3"/><path d="M2 5 H7 M2 9 H6 M3 13 H6" stroke="#bbb" stroke-width="1.5"/></g><g transform="translate(33 133)"><path d="M2 4 L18 20 M5 2 L20 17" stroke="#3a7ae0" stroke-width="1.5" stroke-dasharray="4 2"/><path d="M4 18 L16 4 L19 6 L7 19Z" fill="#e0b050" stroke="#805020" stroke-width="0.8"/><path d="M16 4 L19 6 L20 3 L17 2Z" fill="#e03030"/><path d="M15 0 H21 L18 3Z" fill="#111"/></g><g transform="translate(7 159)"><rect x="4" y="5" width="12" height="10" fill="#e8eefc" stroke="#666"/><path d="M1 1 L5 5 M19 1 L15 5 M1 19 L5 15 M19 19 L15 15" stroke="#40c040" stroke-width="2.5"/></g><g transform="translate(33 159)"><path d="M8 4 Q0 8 6 14 Q12 20 16 14 Q18 8 12 10" stroke="#3a70d0" stroke-width="2" fill="none"/><path d="M4 18 L16 4 L19 6 L7 19Z" fill="#e0b050" stroke="#805020" stroke-width="0.8"/><path d="M16 4 L19 6 L20 3 L17 2Z" fill="#e03030"/><path d="M15 0 H21 L18 3Z" fill="#111"/></g><g transform="translate(7 184.5)"><circle cx="12" cy="9" r="5.5" fill="#c6daf0" stroke="#6a8ab8" stroke-width="1.5"/><path d="M8 13 L2 19" stroke="#aaa" stroke-width="3"/><rect x="13" y="12" width="6" height="7" fill="#777" stroke="#333" stroke-width="0.8"/><path d="M1 3 H5 M3 1 V5 M1 7 H5" stroke="#111" stroke-width="1"/><path d="M15 0 H21 L18 3Z" fill="#111"/></g><g transform="translate(33 184.5)"><rect x="2" y="3" width="16" height="15" fill="none" stroke="#f0e000" stroke-width="2.2"/><path d="M5 10 L9 15 L17 5" stroke="#40c040" stroke-width="3" fill="none"/><path d="M15 0 H21 L18 3Z" fill="#111"/></g><g transform="translate(7 210)"><path d="M1 11 L10 6 L19 10 L19 15 L10 20 L1 15Z" fill="#e4ecf8" stroke="#8a9ab8" stroke-width="0.8"/><path d="M6 14 V2" stroke="#2a70e0" stroke-width="1.8"/><path d="M6 14 L15 8" stroke="#40b040" stroke-width="1.8"/><path d="M6 14 L14 19" stroke="#e03030" stroke-width="1.8"/><path d="M15 0 H21 L18 3Z" fill="#111"/></g><g transform="translate(33 210)"><path d="M3 18 Q2 2 8 6 Q12 12 14 16 Q18 20 18 12" stroke="#3a70d0" stroke-width="2" fill="none"/><path d="M4 18 L16 4 L19 6 L7 19Z" fill="#e0b050" stroke="#805020" stroke-width="0.8"/><path d="M16 4 L19 6 L20 3 L17 2Z" fill="#e03030"/><path d="M15 0 H21 L18 3Z" fill="#111"/></g><g transform="translate(7 237.5)"><path d="M1 3 H12 L14 5 H3Z M1 6 H12 L14 8 H3Z M1 9 H12" stroke="#6a7ab8" stroke-width="1.5" fill="#c8d0f0"/><ellipse cx="10" cy="14" rx="8" ry="5" fill="#9b7560" stroke="#5a4030"/><circle cx="7" cy="15" r="2" fill="#2060e0"/><circle cx="11" cy="15.5" r="2" fill="#20a040"/><circle cx="13" cy="12" r="1.8" fill="#e03030"/><path d="M11 11 L18 2" stroke="#b06a20" stroke-width="2"/><path d="M15 0 H21 L18 3Z" fill="#111"/></g><g transform="translate(33 237.5)"><path d="M6 2 L20 2 L15 18 L1 18Z" fill="#9cc0f0" stroke="#2a5ad0" stroke-width="1.5"/><path d="M13 2 L8 18 M3 10 H17" stroke="#e8f0ff" stroke-width="1.5"/><path d="M15 0 H21 L18 3Z" fill="#111"/></g><g transform="translate(7 263)"><path d="M3 10 Q3 3 11 3 L11 0 L17 5 L11 10 L11 7 Q7 7 6 11Z" fill="#5b8fd6" stroke="#3a6ab0" stroke-width="0.8"/><path d="M17 10 Q17 17 9 17 L9 20 L3 15 L9 10 L9 13 Q13 13 14 9Z" fill="#5b8fd6" stroke="#3a6ab0" stroke-width="0.8"/><path d="M15 0 H21 L18 3Z" fill="#111"/></g><g transform="translate(33 263)"><path d="M3 6 L11 3 L18 6 L18 15 L10 19 L3 15Z" fill="#888" stroke="#333"/><path d="M3 6 L10 9 L18 6 L11 3Z" fill="#ccc"/><path d="M10 9 V19" stroke="#333"/><path d="M15 0 H21 L18 3Z" fill="#111"/></g><g transform="translate(7 289)"><text x="4" y="17" font-size="19" font-weight="bold" fill="#5a88d0" font-family="Liberation Sans">?</text><ellipse cx="10" cy="19" rx="6" ry="1.5" fill="#888" opacity="0.6"/><path d="M15 0 H21 L18 3Z" fill="#111"/></g><g transform="translate(33 289)"><path d="M2 6 V19 M19 6 V19" stroke="#555" stroke-width="1.5"/><path d="M3 9 H18" stroke="#e8d800" stroke-width="2"/><path d="M3 9 L7 6 V12Z M18 9 L14 6 V12Z" fill="#e8d800"/><path d="M15 0 H21 L18 3Z" fill="#111"/></g><g transform="translate(7 315)"><path d="M4 6 H16 L14 19 H6Z" fill="#a8c8e8" stroke="#5a7aa0"/><rect x="8" y="2" width="4" height="4" fill="#e8d000"/><path d="M8 9 L12 16" stroke="#d0e040" stroke-width="2"/><path d="M15 0 H21 L18 3Z" fill="#111"/></g><g transform="translate(33 315)"><path d="M17 18 Q18 8 9 8 L9 4 L2 10 L9 16 L9 12 Q15 12 13 18Z" fill="#aaa" stroke="#888"/><path d="M15 0 H21 L18 3Z" fill="#111"/></g><g transform="translate(7 340.7)"><rect x="2" y="2" width="3" height="16" fill="#7a7a7a"/><circle cx="11" cy="9" r="6" fill="none" stroke="#a06020" stroke-width="1.5"/><circle cx="11" cy="9" r="2" fill="#f0b020"/><path d="M3 14 H18 L14 19 H2Z" fill="#f08020"/><path d="M15 0 H21 L18 3Z" fill="#111"/></g><g transform="translate(33 340.7)"><path d="M2 5 H9 L11 7 H18 L16 14 H4Z" fill="#f0d070" stroke="#b08030"/><rect x="6" y="11" width="13" height="9" fill="#eef2fa" stroke="#333"/><path d="M8 6 Q12 2 16 5" stroke="#30a030" stroke-width="2.5" fill="none"/></g></svg>
<div class="hsep" style="left:0;top:121px;width:60px"></div>
<div class="hsep" style="left:0;top:375px;width:60px"></div>
<svg class="a" style="left:0;top:0" width="400" height="290"><rect x="64" y="113" width="24" height="24" fill="#878a9a" stroke="none"/><g transform="translate(64 113)"><rect x="3" y="4" width="18" height="3.5" rx="1" fill="#3a5a94"/><rect x="3" y="10.5" width="18" height="3.5" rx="1" fill="#3a5a94"/><rect x="3" y="17" width="18" height="3.5" rx="1" fill="#3a5a94"/></g><rect x="92" y="113" width="24" height="24" fill="#878a9a" stroke="none"/><g transform="translate(92 113)"><rect x="7" y="8" width="11" height="9" fill="#e8eefc" stroke="#555"/><path d="M3 4 L7 8 M21 4 L17 8 M3 21 L7 17 M21 21 L17 17" stroke="#40c040" stroke-width="2.5"/></g><rect x="120" y="113" width="24" height="24" fill="#878a9a" stroke="none"/><g transform="translate(120 113)"><circle cx="14" cy="10" r="6" fill="#c0d4ee" stroke="#6a8ab8" stroke-width="1.5"/><path d="M10 14 L4 20" stroke="#ccc" stroke-width="3"/><path d="M4 6 H8 M4 10 H7" stroke="#bbb" stroke-width="1.5"/></g><rect x="148" y="113" width="24" height="24" fill="#878a9a" stroke="none"/><g transform="translate(148 113)"><path d="M4 14 L13 6 L22 14 L13 22Z" fill="none" stroke="#666" stroke-width="0.6"/><path d="M11 15 V3" stroke="#1a70f0" stroke-width="2"/><path d="M11 15 L20 8" stroke="#40b040" stroke-width="2"/><path d="M11 15 L19 21" stroke="#e02020" stroke-width="2"/><circle cx="11" cy="15" r="2" fill="#eee" stroke="#333"/></g><rect x="176" y="113" width="24" height="24" fill="#878a9a" stroke="none"/><g transform="translate(176 113)"><polygon points="3,6.7 12.4,3.2 21.8,6.4 12.4,10.5" fill="none" stroke="#0a0a0a" stroke-width="1.3"/><polygon points="3,15.8 12.4,12 21.8,16.3 12.4,21.6" fill="none" stroke="#0a0a0a" stroke-width="1.3"/><path d="M3 6.7 V15.8 M21.8 6.4 V16.3 M12.4 3.2 V21.6" stroke="#0a0a0a" stroke-width="1.3"/><polygon points="3,6.7 12.4,3.2 21.8,6.4 12.4,10.5" fill="#48d040" stroke="#1a9a1a" stroke-width="0.8"/></g><rect x="204" y="113" width="24" height="24" fill="#878a9a" stroke="none"/><g transform="translate(204 113)"><polygon points="3,6.7 12.4,3.2 21.8,6.4 12.4,10.5" fill="none" stroke="#0a0a0a" stroke-width="1.3"/><polygon points="3,15.8 12.4,12 21.8,16.3 12.4,21.6" fill="none" stroke="#0a0a0a" stroke-width="1.3"/><path d="M3 6.7 V15.8 M21.8 6.4 V16.3 M12.4 3.2 V21.6" stroke="#0a0a0a" stroke-width="1.3"/><polygon points="3,15.8 12.4,12 21.8,16.3 12.4,21.6" fill="#48d040" stroke="#1a9a1a" stroke-width="0.8"/></g><rect x="232" y="113" width="24" height="24" fill="#878a9a" stroke="none"/><g transform="translate(232 113)"><polygon points="3,6.7 12.4,3.2 21.8,6.4 12.4,10.5" fill="none" stroke="#0a0a0a" stroke-width="1.3"/><polygon points="3,15.8 12.4,12 21.8,16.3 12.4,21.6" fill="none" stroke="#0a0a0a" stroke-width="1.3"/><path d="M3 6.7 V15.8 M21.8 6.4 V16.3 M12.4 3.2 V21.6" stroke="#0a0a0a" stroke-width="1.3"/><polygon points="3,6.7 12.4,3.2 12.4,12 3,15.8" fill="#48d040" stroke="#1a9a1a" stroke-width="0.8"/></g><rect x="260" y="113" width="24" height="24" fill="#878a9a" stroke="none"/><g transform="translate(260 113)"><polygon points="3,6.7 12.4,3.2 21.8,6.4 12.4,10.5" fill="none" stroke="#0a0a0a" stroke-width="1.3"/><polygon points="3,15.8 12.4,12 21.8,16.3 12.4,21.6" fill="none" stroke="#0a0a0a" stroke-width="1.3"/><path d="M3 6.7 V15.8 M21.8 6.4 V16.3 M12.4 3.2 V21.6" stroke="#0a0a0a" stroke-width="1.3"/><polygon points="12.4,10.5 21.8,6.4 21.8,16.3 12.4,21.6" fill="#48d040" stroke="#1a9a1a" stroke-width="0.8"/></g><rect x="288" y="113" width="24" height="24" fill="#878a9a" stroke="none"/><g transform="translate(288 113)"><polygon points="3,6.7 12.4,3.2 21.8,6.4 12.4,10.5" fill="none" stroke="#0a0a0a" stroke-width="1.3"/><polygon points="3,15.8 12.4,12 21.8,16.3 12.4,21.6" fill="none" stroke="#0a0a0a" stroke-width="1.3"/><path d="M3 6.7 V15.8 M21.8 6.4 V16.3 M12.4 3.2 V21.6" stroke="#0a0a0a" stroke-width="1.3"/><polygon points="3,6.7 12.4,10.5 12.4,21.6 3,15.8" fill="#48d040" stroke="#1a9a1a" stroke-width="0.8"/></g><rect x="316" y="113" width="24" height="24" fill="#878a9a" stroke="none"/><g transform="translate(316 113)"><polygon points="3,6.7 12.4,3.2 21.8,6.4 12.4,10.5" fill="none" stroke="#0a0a0a" stroke-width="1.3"/><polygon points="3,15.8 12.4,12 21.8,16.3 12.4,21.6" fill="none" stroke="#0a0a0a" stroke-width="1.3"/><path d="M3 6.7 V15.8 M21.8 6.4 V16.3 M12.4 3.2 V21.6" stroke="#0a0a0a" stroke-width="1.3"/><polygon points="12.4,3.2 21.8,6.4 21.8,16.3 12.4,12" fill="#48d040" stroke="#1a9a1a" stroke-width="0.8"/></g><rect x="344" y="113" width="24" height="24" fill="#878a9a" stroke="none"/><g transform="translate(344 113)"><polygon points="3,6.7 12.4,3.2 21.8,6.4 21.8,16.3 12.4,21.6 3,15.8" fill="#38c838" stroke="#1a8a1a" stroke-width="1"/><polygon points="3,6.7 12.4,3.2 21.8,6.4 12.4,10.5" fill="#50dc50"/><polygon points="12.4,10.5 21.8,6.4 21.8,16.3 12.4,21.6" fill="#60e860"/><path d="M3 6.7 L12.4 10.5 L21.8 6.4 M12.4 10.5 V21.6" stroke="#1a8a1a" stroke-width="1" fill="none"/></g><rect x="64" y="141" width="24" height="24" fill="#878a9a" stroke="none"/><g transform="translate(64 141)"><g transform="translate(2 2)"><path d="M5 4 V16 A5 2.2 0 0 0 15 16 V4" fill="none" stroke="#222" stroke-width="1.2"/><ellipse cx="10" cy="4" rx="5" ry="2.2" fill="none" stroke="#222" stroke-width="1.2"/><path d="M5 14 A5 2.2 0 0 0 15 14" fill="none" stroke="#222"/></g></g><rect x="64" y="169" width="24" height="24" fill="#878a9a" stroke="none"/><g transform="translate(64 169)"><g transform="translate(2 2)"><path d="M5 4 V16 A5 2.2 0 0 0 15 16 V4" fill="none" stroke="#222" stroke-width="1.2"/><ellipse cx="10" cy="4" rx="5" ry="2.2" fill="none" stroke="#222" stroke-width="1.2"/></g></g><rect x="64" y="197" width="24" height="24" fill="#b8a870" stroke="#e0c060"/><g transform="translate(64 197)"><g transform="translate(2 2)"><path d="M5 4 V16 A5 2.2 0 0 0 15 16 V4" fill="url(#gcyl)" stroke="#1a2a5a" stroke-width="1.2"/><ellipse cx="10" cy="4" rx="5" ry="2.2" fill="url(#gcyl)" stroke="#1a2a5a" stroke-width="1.2"/></g></g><rect x="64" y="225" width="24" height="24" fill="#878a9a" stroke="none"/><g transform="translate(64 225)"><g transform="translate(2 2)"><path d="M5 4 V16 A5 2.2 0 0 0 15 16 V4" fill="#dfe6f4" stroke="#333" stroke-width="1.2"/><ellipse cx="10" cy="4" rx="5" ry="2.2" fill="#dfe6f4" stroke="#333" stroke-width="1.2"/></g></g><rect x="64" y="253" width="24" height="24" fill="#878a9a" stroke="none"/><g transform="translate(64 253)"><g transform="translate(2 2)"><path d="M5 4 V16 A5 2.2 0 0 0 15 16 V4" fill="none" stroke="#333" stroke-width="1"/><ellipse cx="10" cy="4" rx="5" ry="2.2" fill="none" stroke="#333" stroke-width="1"/><path d="M7 5 L9 17 M12 5 L8 12 M13 6 L13 16" stroke="#333" stroke-width="0.8"/></g></g></svg>
<svg class="a" style="left:60px;top:840px" width="80" height="120" viewBox="60 840 80 120">
<rect x="94.5" y="916.5" width="24" height="24" fill="#8a98b0" fill-opacity="0.45" stroke="#c8c8c8" stroke-width="1"/>
<rect x="119.3" y="874" width="2.8" height="66" fill="#20e8f0"/>
<path d="M117 876 L120.7 866.5 L124.5 876Z" fill="#20e8f0"/>
<path d="M95 939.5 H114 V942.5 H95Z" fill="#e02020"/><path d="M96 940.6 H114" stroke="#f0f000" stroke-width="1"/>
<path d="M84 941 L95 937 L95 945Z" fill="#e00000"/>
<circle cx="120.5" cy="942" r="4" fill="#555"/><circle cx="116.5" cy="941" r="4" fill="#1a8a1a"/>
<path d="M117.5 856 H123.5 L117.5 863.5 H123.8" stroke="#e00000" stroke-width="1.2" fill="none"/>
<path d="M74.5 937 L81.5 945.5 M81.5 937 L74.5 945.5" stroke="#e00000" stroke-width="1"/>
</svg>
<svg class="a" style="left:1700px;top:780px" width="220" height="140" viewBox="1700 780 220 140">
<defs><linearGradient id="arc" x1="0" y1="1" x2="1" y2="0"><stop offset="0" stop-color="#e8a040"/><stop offset="0.5" stop-color="#d0d040"/><stop offset="1" stop-color="#30d0c0"/></linearGradient></defs>
<rect x="1748" y="794" width="156" height="70" rx="7" fill="#b8d6ea"/>
<rect x="1748" y="797" width="150" height="6" rx="3" fill="#1a80c8"/>
<rect x="1731.5" y="799.5" width="170" height="58.5" rx="8" fill="#fff" stroke="#1a80c8" stroke-width="2"/>
<text x="1742" y="825" font-size="22" font-weight="bold" font-family="Liberation Sans" fill="#000">A</text>
<circle cx="1782" cy="819.5" r="8" fill="#000"/><circle cx="1777" cy="815" r="7.3" fill="#fff"/>
<path d="M1746 837 L1745 841" stroke="#000" stroke-width="1.5"/><circle cx="1759" cy="850" r="1" fill="#000"/>
<path d="M1772 838 H1791 V844 H1786 V853 H1777 V844 H1772Z" fill="#000"/>
<path d="M1808 862 Q1806 835 1840 830 L1880 826 Q1900 835 1897 862Z" fill="#1a9ae0" stroke="#333" stroke-width="0.5"/>
<path d="M1893 840 Q1918 845 1916 860 L1895 862Z" fill="#fff" stroke="#555" stroke-width="0.6"/>
<circle cx="1893" cy="822" r="4.5" fill="#e00020"/>
<circle cx="1840" cy="826" r="33" fill="#1a9ae0" stroke="#333" stroke-width="0.6"/>
<ellipse cx="1834" cy="830" rx="27" ry="24" fill="#fff" stroke="#555" stroke-width="0.6"/>
<ellipse cx="1836" cy="805" rx="6" ry="7" fill="#fff" stroke="#555" stroke-width="0.6"/><ellipse cx="1847" cy="811" rx="6" ry="7" fill="#fff" stroke="#555" stroke-width="0.6"/>
<circle cx="1845" cy="811" r="1.6" fill="#000"/>
<circle cx="1835" cy="814.5" r="4" fill="#e00020"/><circle cx="1836" cy="813.5" r="1" fill="#fff"/>
<path d="M1812 820 L1826 826 M1809 828 L1824 830 M1841 835 L1860 840 M1840 842 L1858 848 M1815 838 Q1835 852 1858 846" stroke="#444" stroke-width="0.6" fill="none"/>
<circle cx="1847" cy="858" r="7" fill="#fff" stroke="#555" stroke-width="0.6"/>
<ellipse cx="1812" cy="840" rx="6" ry="8" fill="#fff" stroke="#555" stroke-width="0.6"/>
<rect x="1829" y="856" width="7" height="6" fill="#e0c020"/>
<rect x="1836.5" y="862.5" width="67" height="41" rx="20" fill="#1e2434" stroke="#333a48"/>
<line x1="1840" y1="883" x2="1900" y2="883" stroke="#3a4254" stroke-width="1"/>
<circle cx="1813.7" cy="883" r="29" fill="#2a3244" stroke="#1a2030" stroke-width="1.5"/>
<path d="M1800 856 A27 27 0 0 1 1838 877" stroke="#3a4a5c" stroke-width="1" fill="none"/>
<path d="M1814 858 A25 25 0 0 1 1839 883 A25 25 0 0 1 1814 908 A25 25 0 0 1 1789 886" stroke="url(#arc)" stroke-width="1.8" fill="none"/>
<text x="1797" y="893" font-size="23" font-family="Liberation Sans" fill="#e8ecf0">77</text>
<text x="1825" y="893" font-size="8" font-family="Liberation Sans" fill="#e8ecf0">%</text>
<path d="M1849 868 L1846 872 H1848 V876 H1850 V872 H1852Z" fill="#40a0f0"/>
<path d="M1849 897 L1846 893 H1848 V889 H1850 V893 H1852Z" fill="#30c030"/>
<text x="1871" y="876" font-size="10" font-weight="bold" font-family="Liberation Sans" fill="#e0e4ea">0</text><text x="1878" y="876" font-size="8" font-family="Liberation Sans" fill="#aab">K/s</text>
<text x="1871" y="897" font-size="10" font-weight="bold" font-family="Liberation Sans" fill="#e0e4ea">0</text><text x="1878" y="897" font-size="8" font-family="Liberation Sans" fill="#aab">K/s</text>
</svg>
<div class="vsep" style="left:1337px;top:1004px;height:14px;width:3px"></div>
<div class="a" style="left:1341px;top:1003px;width:131px;height:15px;background:#fff"></div>
<svg class="a" style="left:1458px;top:1004px" width="14" height="14"><circle cx="8.5" cy="5.5" r="3.8" fill="none" stroke="#3060b0" stroke-width="1.4"/><path d="M6 8 L1.5 12.5" stroke="#3060b0" stroke-width="1.8"/></svg>
<div class="vsep" style="left:1475px;top:1004px;height:14px;width:3px"></div>
<div class="t" style="left:1486px;top:1005px;font-size:12px">绝对 XY 上视图</div>
<div class="sbsep" style="left:1592px;top:1004px"></div>
<div class="t" style="left:1601px;top:1005px;font-size:12px">绝对视图</div>
<div class="vsep" style="left:1657px;top:1004px;height:14px;width:3px"></div>
<div class="t" style="left:1668px;top:1005px;font-size:12px;font-weight:bold">LAYER0</div>
<div class="sbsep" style="left:1726px;top:1004px"></div>
<div class="sbsep" style="left:1757px;top:1004px"></div>
<div class="sbsep" style="left:1800px;top:1004px"></div>
<div class="sbsep" style="left:1843px;top:1004px"></div>
<div class="sbsep" style="left:1886px;top:1004px"></div>
<div class="a" style="left:1762px;top:1005px;width:32px;height:12px;background:#4a6898"></div>
<div class="a" style="left:1805px;top:1005px;width:32px;height:12px;background:#4a6898"></div>
<div class="a" style="left:1848px;top:1005px;width:32px;height:12px;background:#4a6898"></div>
<svg class="a" style="left:1892px;top:1003px" width="16" height="16"><circle cx="8" cy="8" r="6.5" fill="#2060d0"/><path d="M4 4 Q8 6 7 9 Q4 10 3 8Z M9 3 Q13 5 12 9 Q10 12 9 13 Q8 9 10 7Z" fill="#30b030"/></svg>
<div class="sbsep" style="left:1133px"></div>
<div class="sbsep" style="left:1175px"></div>
<div class="sbsep" style="left:1207px"></div>
<div class="sbsep" style="left:1237px"></div>
<div class="sbsep" style="left:1268px"></div>
<div class="sbsep" style="left:1299px"></div>
<div class="sbsep" style="left:1330px"></div>
<div class="sbsep" style="left:1362px"></div>
<div class="sbsep" style="left:1393px"></div>
<div class="sbsep" style="left:1424px"></div>
<div class="sbsep" style="left:1455px"></div>
<div class="sbsep" style="left:1580px"></div>
<div class="sbsep" style="left:1654px"></div>
<div class="t" style="left:1140px;top:1025px;font-size:12px">拴牢</div>
<svg class="a" style="left:0;top:0" width="1920" height="1048" viewBox="0 0 1920 1048"><rect x="1182.5" y="1023.5" width="16" height="16" fill="#d8c8d0" stroke="#777"/><path d="M1186 1030 Q1187 1026 1192 1027 M1195 1033 Q1194 1037 1189 1036" stroke="#e04060" stroke-width="1.8" fill="none"/><rect x="1212" y="1023" width="18" height="17" fill="#fde68a"/><path d="M1216 1027 L1226 1037 L1222 1037 L1220 1040Z" fill="#eee" stroke="#777"/><circle cx="1218" cy="1028" r="4" fill="#e060c0" opacity="0.7"/><path d="M1245 1030 L1252 1024 L1260 1030 V1038 H1246Z" fill="#c0d4f0" stroke="#556"/><path d="M1250 1027 L1259 1024 L1261 1028Z" fill="#f0b060"/><rect x="1249" y="1033" width="4" height="4" fill="#3060c0"/><text x="1277" y="1038" font-size="17" font-weight="bold" fill="#4a7ad0" font-family="Liberation Sans">?</text><ellipse cx="1284" cy="1038" rx="6" ry="1.5" fill="#888" opacity="0.5"/><rect x="1308" y="1024" width="8" height="8" fill="#5080d0" stroke="#224"/><rect x="1314" y="1030" width="8" height="8" fill="#7a9ac0" stroke="#224"/><path d="M1305 1034 H1313 M1309 1031 L1313 1034 L1309 1037" stroke="#e02020" stroke-width="1.8" fill="none"/><rect x="1337" y="1023" width="18" height="17" fill="#fde68a"/><path d="M1339 1027 L1346 1024 L1353 1027 L1353 1036 L1346 1039 L1339 1036Z" fill="#8ab0c0" stroke="#2a4a8a"/><path d="M1339 1027 L1346 1030 L1353 1027 L1346 1024Z" fill="#e040e0"/><rect x="1370.5" y="1024.5" width="11" height="15" fill="#e8e8e8" stroke="#666"/><rect x="1372" y="1028" width="8" height="2" fill="#e0a040"/><rect x="1372" y="1033" width="8" height="2" fill="#e0a040"/><circle cx="1406" cy="1032" r="6.5" fill="none" stroke="#20a040" stroke-width="2.2"/><path d="M1404 1023 L1409 1026 L1404 1029Z" fill="#20a040"/><path d="M1406 1029 V1035 M1403 1032 H1409" stroke="#2040a0" stroke-width="1.5"/><rect x="1430.5" y="1024.5" width="16" height="15" fill="none" stroke="#555" stroke-width="1.5"/><path d="M1438.5 1024 V1040 M1430 1032 H1447" stroke="#555" stroke-width="1.5"/></svg>
<div class="t" style="left:1463px;top:1025px;font-size:12px">LS: 1.00 PS: 1.00</div>
<div class="t" style="left:1589px;top:1025px;font-size:12px">单位: 毫米</div>
<div class="t" style="left:1663px;top:1025px;font-size:12.5px;letter-spacing:0.22px"><span style="color:#e00000">X =-0891.615</span> Y = 0561.585 Z = 0000.000</div>
<div class="a" style="left:394px;top:1040px;width:44px;height:8px;background:#675f52"></div>
<div class="a" style="left:438px;top:1040px;width:4px;height:8px;background:#55504a"></div><div class="a" style="left:442px;top:1040px;width:1478px;height:8px;background:#403a2b"></div>
<div class="t" style="left:1812px;top:1044px;font-size:11px;color:#bbb">11:18</div>
</body></html>
